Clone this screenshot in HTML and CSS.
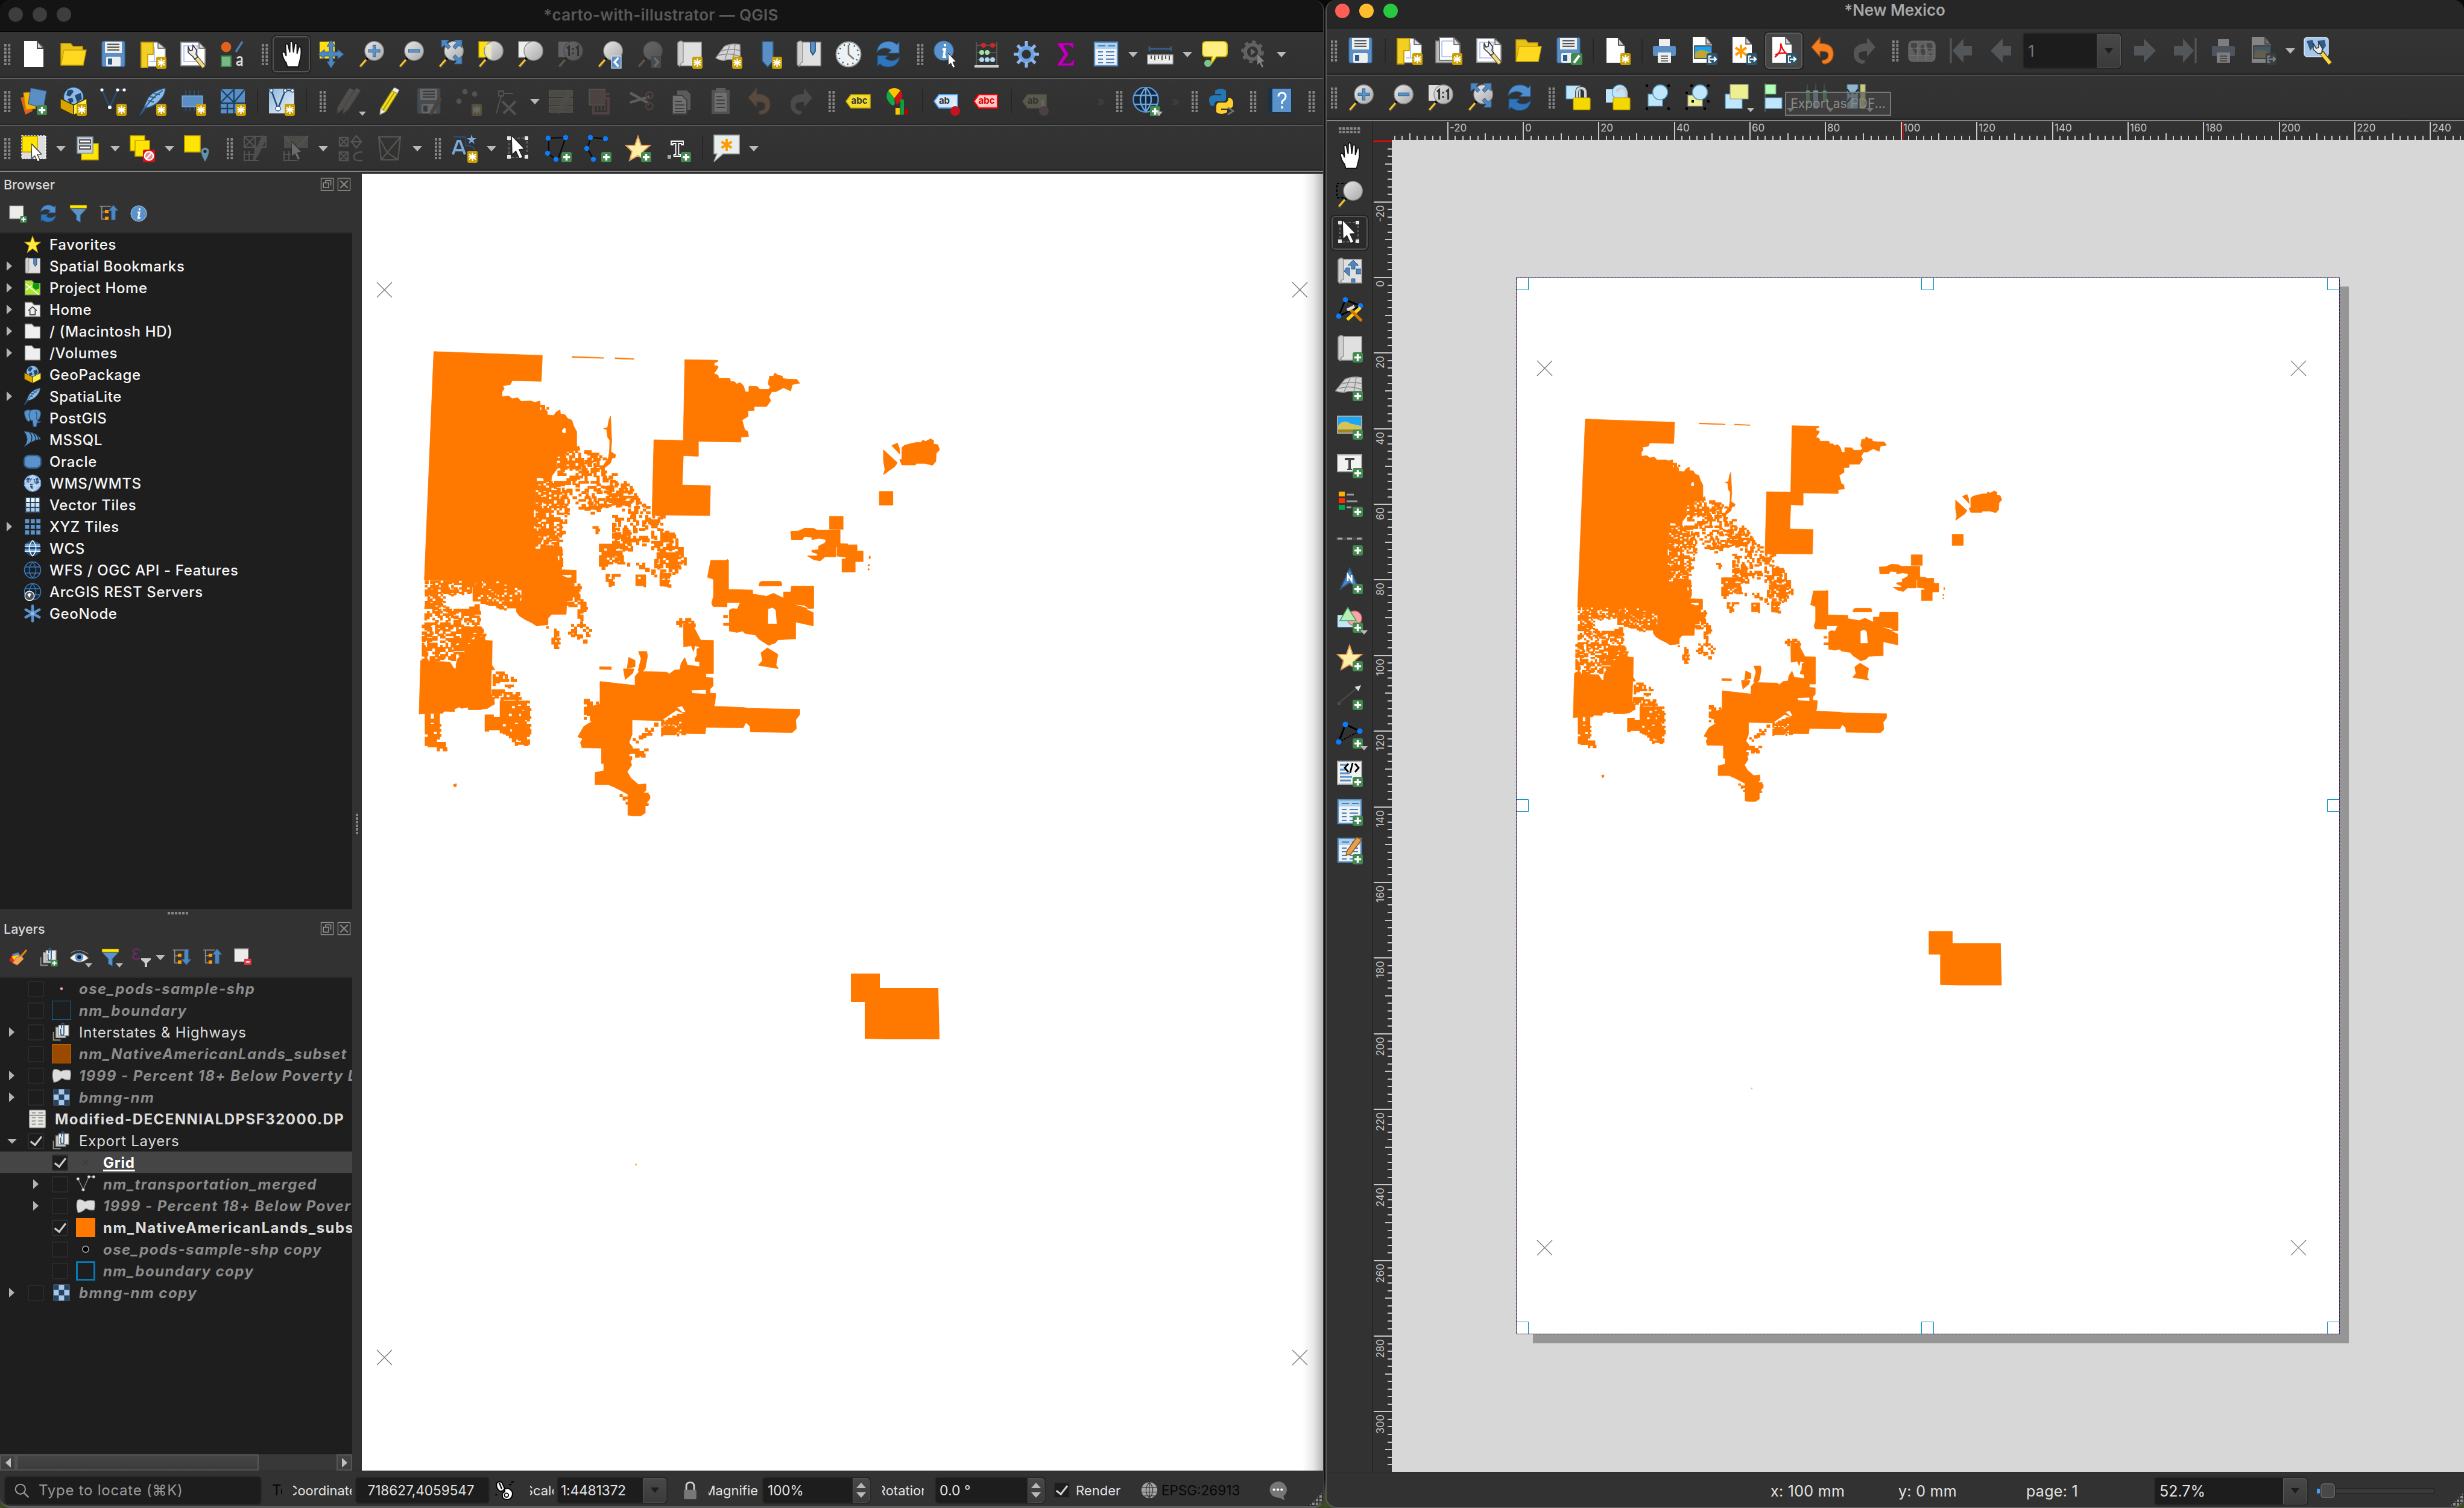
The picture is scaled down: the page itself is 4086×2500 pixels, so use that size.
FILE: index.html
```html
<!DOCTYPE html>
<html lang="en">
<head>
<meta charset="utf-8">
<title>QGIS</title>
<link rel="stylesheet" href="styles.css">
</head>
<body>
<svg class="defs" aria-hidden="true">
<defs>
<linearGradient id="gLens" x1="0" y1="0" x2="1" y2="1"><stop offset="0" stop-color="#e8e8e8"/><stop offset="1" stop-color="#a9a9a9"/></linearGradient>
<linearGradient id="gBlue" x1="0" y1="0" x2="1" y2="1"><stop offset="0" stop-color="#8fb6dd"/><stop offset="1" stop-color="#eef4fa"/></linearGradient>

<!-- badges -->
<symbol id="b-new" viewBox="0 0 24 24"><rect x="14.5" y="14" width="8.5" height="10" rx="1.5" fill="#c9a000"/><path d="M18.75 15.5v7M16 16.8l5.5 4.4M21.5 16.8L16 21.2M15.6 19h6.3" stroke="#fff" stroke-width="1.1"/></symbol>
<symbol id="b-add" viewBox="0 0 24 24"><rect x="14.5" y="15" width="8.5" height="8.5" rx="1.5" fill="#41894f"/><path d="M18.75 16.5v5.6M16 19.3h5.6" stroke="#fff" stroke-width="1.7"/></symbol>
<symbol id="b-exp" viewBox="0 0 24 24"><rect x="14" y="14" width="9" height="10" rx="2" fill="#2c566f"/><path d="M18 16.5h-2v5h2M17 19h4.5M20 17l2 2-2 2" stroke="#fff" stroke-width="1.1" fill="none"/></symbol>
<symbol id="mag" viewBox="0 0 24 24"><path d="M9.5 15L3 23" stroke="#444" stroke-width="2.6"/><path d="M8 16.5L3.2 22" stroke="#ffc423" stroke-width="1.6"/><path d="M10 14.2l-1.6 2" stroke="#000" stroke-width="2.2"/><circle cx="14.8" cy="9.2" r="7.8" fill="url(#gLens)" stroke="#8d8d8d" stroke-width=".7"/></symbol>
<symbol id="roll" viewBox="0 0 24 24"><path d="M5 2h17v19.5H5z" fill="#e0e0e0" stroke="#a5a5a5" stroke-width=".8"/><path d="M2.5 2.5q3-3 4.5 0v16q-2 0-3 3.500l-1.500-1.500z" fill="#cfcfcf" stroke="#9a9a9a" stroke-width=".8"/></symbol>
<symbol id="cursor" viewBox="0 0 24 24"><path d="M0 0l11 11.500-4.500.5 3 6.500-2.800 1.300-3-6.500L.5 16.500z" fill="#fff" stroke="#222" stroke-width=".8"/></symbol>

<!-- project -->
<symbol id="new" viewBox="0 0 24 24"><path d="M4 1h11l5 5v16.500H4z" fill="#fff"/><path d="M15 1v6h5z" fill="#d6d6d6" stroke="#444" stroke-width=".9"/></symbol>
<symbol id="open" viewBox="0 0 24 24"><path d="M1.500 3h8l2 2.500h8V20h-18z" fill="#e8c11c" stroke="#c9a000" stroke-width=".7"/><path d="M4 8.500h18.500L20 21H1.500z" fill="#ffd91f" stroke="#c9a400" stroke-width=".7"/></symbol>
<symbol id="save" viewBox="0 0 24 24"><rect x="2.500" y="1.200" width="19" height="21" rx="1.500" fill="#5a8fc5" stroke="#3a6a9a" stroke-width=".6"/><rect x="5" y="1.500" width="14" height="9.500" fill="#efefef"/><path d="M7 3.800h10M7 6.100h10M7 8.400h10" stroke="#444" stroke-width="1"/><rect x="6" y="14" width="12" height="8" rx="1" fill="#efefef"/><rect x="7.500" y="15.500" width="3.500" height="5" fill="#2d5c8a"/></symbol>
<symbol id="layout" viewBox="0 0 24 24"><path d="M2 2h14l6 5v15H2z" fill="#fff" stroke="#999" stroke-width=".8"/><path d="M16 2v5h6z" fill="#ddd" stroke="#555" stroke-width=".7"/><path d="M2 2h10v10H7.500v11H2z" fill="#f3cf25" stroke="#c9a000" stroke-width=".9"/><path d="M13 6v12M9 18h9" stroke="#b9c9f5" stroke-width="1"/><use href="#b-new"/></symbol>
<symbol id="wrench" viewBox="0 0 24 24"><path d="M2 2h15l5 5v14.500H2z" fill="#fff" stroke="#999" stroke-width=".9"/><path d="M17 2v5h5z" fill="#ddd" stroke="#555" stroke-width=".7"/><path d="M4.500 5h11v13h-11z" fill="none" stroke="#b9c9f5"/><path d="M14 14l7.500 9" stroke="#57481a" stroke-width="3.800"/><path d="M14.500 14.500l6.500 8" stroke="#f0d98a" stroke-width="2.600"/><path d="M8 5.500v5l4 3.500 1.500 2 2.500-2-1.500-2 .5-3.500-3-4-.5 4-2 .5z" fill="#ececec" stroke="#333" stroke-width=".8"/></symbol>
<symbol id="style" viewBox="0 0 24 24"><circle cx="6.500" cy="6" r="4.200" fill="#e0621d"/><path d="M14.500 10L20 1.500" stroke="#4c7fb5" stroke-width="1.700"/><rect x="2.500" y="13.500" width="8" height="8.500" fill="#77b885" stroke="#3c8a50"/><path d="M15.500 15.200q3-2 4 0v6.500M19.500 18q-4-.5-4 1.800.8 2.200 4 0" fill="none" stroke="#ddd" stroke-width="1.400"/></symbol>
<symbol id="hand" viewBox="0 0 24 24"><path d="M8 22l-1-3.500Q4.500 16 3.500 10.500q1-1.800 2.500 0l1 2.500L6.500 3.500q1-1.500 2 0L10 10 10.200 1.500q1-1.500 2 0L13 10l1-7q1-1.200 1.900 0L16 11l1.500-5.500q1.300-.8 1.700.5.600 6-.7 10L17 22z" fill="#fff" stroke="#111" stroke-width=".9" transform="translate(.8 .5)"/></symbol>
<symbol id="panto" viewBox="0 0 24 24"><path d="M2.500 1.500H15v14H2.500z" fill="#ffe017"/><path d="M12 .5l3.500 5h-2v4.500h4V8l5 4-5 4v-2.500h-4V18h2L12 23.500 8.500 18h2v-4.500h-4V16L1.500 12l5-4v2h4V5.500h-2z" fill="#4f86bf" stroke="#2d5c8a" stroke-width=".5"/></symbol>
<symbol id="zin" viewBox="0 0 24 24"><use href="#mag"/><path d="M14.800 4.200v10M9.800 9.200h10" stroke="#2d5c8a" stroke-width="2.600"/><path d="M14.800 4.700v9M10.300 9.200h9" stroke="#5a93cc" stroke-width="1.800"/></symbol>
<symbol id="zout" viewBox="0 0 24 24"><use href="#mag"/><path d="M10 9.200h9.600" stroke="#2d5c8a" stroke-width="2.800"/><path d="M10.400 9.200h8.800" stroke="#5a93cc" stroke-width="2"/></symbol>
<symbol id="zfull" viewBox="0 0 24 24"><use href="#mag"/><path d="M4.500 0h6.500L9 2.200l3 3.500-2 2L7 4.500 4.500 6.500zM21.500 0H15l2 2.200-3 3.500 2 2 3-3.200 2.500 2zM21.500 20H15l2-2.200-3-3.500 2-2 3 3.200 2.500-2z" fill="#4f86bf" stroke="#2d5c8a" stroke-width=".5"/></symbol>
<symbol id="zsel" viewBox="0 0 24 24"><path d="M2.500 1.500H12v13H2.500z" fill="#ffe017" stroke="#b99600" stroke-width=".7"/><use href="#mag"/><path d="M8 10V4h5v12Q8.500 15 8 10z" fill="#f3eeb2" opacity=".8"/></symbol>
<symbol id="zlay" viewBox="0 0 24 24"><path d="M2.500 1.500H12v13H2.500z" fill="#eee" stroke="#999" stroke-width=".7"/><use href="#mag"/></symbol>
<symbol id="z11" viewBox="0 0 24 24"><path d="M2.500 1.500H12v13H2.500z" fill="#ddd"/><use href="#mag"/><path d="M9.500 7l1.800-1.500v8M17 7l1.800-1.500v8M14.500 7v1.500M14.500 10.500V12" fill="none" stroke="#333" stroke-width="1.500"/></symbol>
<symbol id="zlast" viewBox="0 0 24 24"><use href="#mag"/><rect x="13.500" y="13.500" width="8" height="10" fill="#5a8fc5" stroke="#dfe9f3" stroke-width=".6"/><path d="M19.300 14.800l-3.300 3.700 3.300 3.700" stroke="#fff" stroke-width="1.700" fill="none"/></symbol>
<symbol id="znext" viewBox="0 0 24 24"><use href="#mag"/><rect x="13.500" y="13.500" width="8" height="10" fill="#5a8fc5"/><path d="M16 14.800l3.300 3.700-3.300 3.700" stroke="#fff" stroke-width="1.700" fill="none"/></symbol>
<symbol id="nmap" viewBox="0 0 24 24"><use href="#roll"/><use href="#b-new"/></symbol>
<symbol id="n3d" viewBox="0 0 24 24"><path d="M8 5.500q6-3 13-1.500l.5 15q-8-4-13-2-3.500.500-7.500-2z" fill="#d3d3d3" stroke="#999" stroke-width=".7"/><path d="M12.500 4.500l-4 12M17 3.800l-1.500 13M5.500 9.500q7-3 16-.5M3 13q9-3 18.500 1" fill="none" stroke="#8a8a8a" stroke-width=".7"/><use href="#b-new"/></symbol>
<symbol id="nbook" viewBox="0 0 24 24"><path d="M6.500 1.500h9v16l-4.500 5-4.500-5z" fill="#5a8fc5" stroke="#2d5c8a" stroke-width=".8"/><use href="#b-new"/></symbol>
<symbol id="book" viewBox="0 0 24 24"><use href="#roll"/><path d="M13.500 1.500h4v8l-2 3-2-3z" fill="#5a8fc5" stroke="#1f4a75" stroke-width=".8"/></symbol>
<symbol id="clock" viewBox="0 0 24 24"><circle cx="12" cy="12" r="10.200" fill="#eef2f2" stroke="#a5a5a5"/><circle cx="12" cy="12" r="8.300" fill="none" stroke="#2d5c8a" stroke-width="1.300" stroke-dasharray="1 3.350"/><path d="M12 4.500V12l4.500 4" fill="none" stroke="#777" stroke-width="1.300"/></symbol>
<symbol id="refresh" viewBox="0 0 24 24"><path d="M2.500 10Q4 2 11 1.500q5-.5 8 2.500l2-2v9h-9l2.500-2.500Q8 4.500 2.500 10z" fill="#4d8fd0" stroke="#2d5c8a" stroke-width=".6"/><path d="M21.500 14q-1.500 8-8.500 8.500-5 .5-8-2.500l-2 2v-9h9l-2.500 2.500Q16 19.500 21.500 14z" fill="#2f75bb" stroke="#1f4a75" stroke-width=".6"/></symbol>
<symbol id="ident" viewBox="0 0 24 24"><circle cx="9.500" cy="9" r="8" fill="#5a93cc" stroke="#3d6ea0" stroke-width=".6"/><path d="M10.500 3.500v2M8.500 8h2l-1 6h2" stroke="#fff" stroke-width="1.900" fill="none"/><g transform="translate(13 11) scale(.62)"><use href="#cursor"/></g></symbol>
<symbol id="abacus" viewBox="0 0 24 24"><path d="M3.500 2v19M20.500 2v19M3 4.500h18M3 10.500h18M3 16.500h18" stroke="#555" stroke-width="1"/><path d="M2 22h20" stroke="#ccc" stroke-width="2"/><g fill="#d22"><circle cx="9.500" cy="4.500" r="2"/><circle cx="17" cy="4.500" r="2"/></g><g fill="#9fe0a5"><circle cx="8" cy="10.500" r="2"/><circle cx="12.500" cy="10.500" r="2"/></g><g fill="#a9d8f5"><circle cx="8" cy="16.500" r="2"/><circle cx="12.500" cy="16.500" r="2"/><circle cx="17" cy="16.500" r="2"/></g></symbol>
<symbol id="gear" viewBox="0 0 24 24"><circle cx="12" cy="12" r="5.500" fill="none" stroke="#6b9fe0" stroke-width="3.400"/><path d="M12 1v4.500M12 18.500V23M1.500 12H6M18 12h4.500M4.600 4.600L8 8M16 16l3.400 3.400M19.400 4.600L16 8M8 16l-3.400 3.400" stroke="#8cb5ea" stroke-width="2.600"/></symbol>
<symbol id="sigma" viewBox="0 0 24 24"><path d="M5 2.500h13v4.500h-1.200q-.5-2.500-3-2.500H9.500L14 12l-5 7.500h5.500q2.500 0 3.200-3H19l-.8 5H5v-1.500L10.500 12 5 4z" fill="#c000b8" stroke="#7b0078" stroke-width=".5"/></symbol>
<symbol id="table" viewBox="0 0 24 24"><rect x="2.500" y="2" width="19" height="19.500" fill="#eef3f8" stroke="#5a8fc5" stroke-width="1.200"/><rect x="3" y="2.500" width="18" height="5" fill="#a9d1ee"/><path d="M5.500 5h6M14 5h5.500M5.500 10h4M12 10h7M5.500 13h4M12 13h7M5.500 16h4M12 16h7M5.500 19h4M12 19h7" stroke="#4c7fb5" stroke-width="1.100"/></symbol>
<symbol id="measure" viewBox="0 0 24 24"><path d="M3 7.500h18M3 5.500v4M21 5.500v4" stroke="#315f8c" stroke-width="1.500"/><rect x="1.500" y="12.500" width="21" height="7.500" fill="#ececec" stroke="#aaa" stroke-width=".7"/><path d="M4.500 13v3M7.500 13v4M10.500 13v3M13.500 13v4M16.500 13v3M19.500 13v4" stroke="#444" stroke-width=".9"/></symbol>
<symbol id="tip" viewBox="0 0 24 24"><path d="M5 1.500h14.500q3 0 3 3V11q0 3-3 3H13.500L9 20.500 10 14H5q-3 0-3-3V4.500q0-3 3-3z" fill="#ffee82" stroke="#d1b400"/><circle cx="6.500" cy="19.500" r="3" fill="#7ec488"/></symbol>
<symbol id="run" viewBox="0 0 24 24"><circle cx="10.500" cy="10" r="6" fill="none" stroke="#aaa" stroke-width="3"/><circle cx="10.500" cy="10" r="8.400" fill="none" stroke="#aaa" stroke-width="2" stroke-dasharray="3 3.500"/><path d="M9 7l4 3-4 3z" fill="#bbb"/><g transform="translate(14 11) scale(.62)"><use href="#cursor"/></g></symbol>

<!-- data sources -->
<symbol id="dsm" viewBox="0 0 24 24"><path d="M1 9l8-2 2 13-6 3z" fill="#e0621d"/><path d="M3.500 5l10-1v14l-8 1z" fill="#f7b500" stroke="#c98c00" stroke-width=".6"/><path d="M9.500 1l13 2.500L20 18 7.500 14z" fill="#5a8fc5" stroke="#2d5c8a" stroke-width=".6"/><use href="#b-add"/></symbol>
<symbol id="gpkg" viewBox="0 0 24 24"><circle cx="12" cy="8.500" r="8.200" fill="#8fb9e6" stroke="#1f4a75" stroke-width=".6"/><path d="M7 3q4-2 5 1L9 8 6 7zM13 7l5-2 1 5-4 3zM7 10l4-1 1 3-3 2z" fill="#1f4a75"/><path d="M1 9.500L12 15v8.500L1 18z" fill="#d9a300" stroke="#3d2f00" stroke-width=".7"/><path d="M23 9.500L12 15v8.500l11-5.500z" fill="#ffee4a" stroke="#3d2f00" stroke-width=".7"/></symbol>
<symbol id="ngpkg" viewBox="0 0 24 24"><use href="#gpkg"/><use href="#b-new"/></symbol>
<symbol id="vline" viewBox="0 0 24 24"><path d="M2.500 2.500L9 17 15.500 2.500h5.500" fill="none" stroke="#27507a" stroke-width="1.300"/><g fill="#fff"><circle cx="2.500" cy="2.500" r="1.300"/><circle cx="9" cy="17" r="1.500"/><circle cx="15.500" cy="2.500" r="1.300"/><circle cx="21" cy="2.500" r="1.300"/></g></symbol>
<symbol id="nshp" viewBox="0 0 24 24"><use href="#vline"/><use href="#b-new"/></symbol>
<symbol id="feather" viewBox="0 0 24 24"><path d="M22 1Q10 4 7 11q-2 4-2.500 6L1 23.500l5-6q7-1 12-7 4-4 4-9.500z" fill="#8fbce6" stroke="#2d5c8a" stroke-width=".7"/><path d="M20 3Q10 9 3 21M9 8l5 1M7.500 11.500l5 1M12.500 5.500l5 1" stroke="#2d5c8a" stroke-width="1" fill="none"/></symbol>
<symbol id="nspat" viewBox="0 0 24 24"><use href="#feather"/><use href="#b-new"/></symbol>
<symbol id="nmem" viewBox="0 0 24 24"><path d="M6 3v17M9.500 3v17M13 3v17M16.500 3v17" stroke="#27507a" stroke-width="1"/><rect x="3" y="7.500" width="17" height="9" fill="#5a8fc5" stroke="#8db3da" stroke-width=".6"/><use href="#b-new"/></symbol>
<symbol id="nmesh" viewBox="0 0 24 24"><path d="M2 2h20v20H2z" fill="#5a8fc5"/><path d="M2 2l11 11M13 2L2 13M13 2v11M22 2l-9 11M2 13.500h20M7.500 14v8M13 14v8M2 18h11" stroke="#1d3f63" stroke-width="1.200"/><use href="#b-new"/></symbol>
<symbol id="nvirt" viewBox="0 0 24 24"><path d="M1.500 1.500h21V22h-21z" fill="url(#gBlue)"/><path d="M3.500 3L9 18 15 3h6" fill="none" stroke="#27507a" stroke-width="1.300"/><g fill="#fff" stroke="#27507a" stroke-width=".7"><circle cx="3.500" cy="3" r="1.400"/><circle cx="9" cy="18" r="2"/><circle cx="15" cy="3" r="1.400"/><circle cx="21" cy="3" r="1.400"/></g><use href="#b-new"/></symbol>
<symbol id="pencil" viewBox="0 0 24 24"><path d="M14.500 3l4.500 2.500L9.500 20.500 4.500 23l.5-5z" fill="#f0dc20" stroke="#8a7a00" stroke-width=".7"/><path d="M14.500 3l2-2.500 4 2L19 5.500zM4.500 23l.5-5 4.500 2.500z" fill="#eee" stroke="#888" stroke-width=".5"/><path d="M16.500 4.500L7 19.500" stroke="#a89400" stroke-width=".8"/></symbol>
<symbol id="pencils" viewBox="0 0 24 24"><path d="M11 3l3.500 2L6 19l-4 3 .5-5zM16.500 3L20 5l-9 14-4 3 .5-5z" fill="#b59583" stroke="#777" stroke-width=".6"/><path d="M11 3l1.500-2 3.500 2-1.500 2zM16.500 3L18 1l3.500 2L20 5z" fill="#aaa"/></symbol>
<symbol id="savee" viewBox="0 0 24 24"><use href="#save"/><path d="M20 8l3 2-7 12-3 2v-3z" fill="#8a7060"/></symbol>
<symbol id="addpt" viewBox="0 0 24 24"><g fill="#8ab29a"><circle cx="9" cy="4" r="2.200"/><circle cx="17" cy="6" r="2.200"/><circle cx="4" cy="12" r="2.200"/></g><use href="#b-new"/></symbol>
<symbol id="vtool" viewBox="0 0 24 24"><path d="M4 3.500h4v4H4zM8 5.500h8M6 8L2 22" fill="none" stroke="#aaa" stroke-width=".9"/><path d="M7 12l11 11M18 12L8 22" stroke="#b0a58a" stroke-width="2"/></symbol>
<symbol id="attr" viewBox="0 0 24 24"><path d="M2 3h19v5H2zM2 9.500h19v5H2zM2 16h19v5H2z" fill="#8c8672" stroke="#bbae50" stroke-width=".8"/><path d="M17 2l4 2-8 16-4 3 1-6z" fill="#a08d84"/></symbol>
<symbol id="trash" viewBox="0 0 24 24"><path d="M2 2h13v13H2z" fill="#7d7660" stroke="#c9b94c" stroke-width=".7"/><path d="M4 6h15M9 4h6M5.500 9.500h12.500V22H5.500z" fill="none" stroke="#d05a64" stroke-width="2"/><path d="M9 11v9M12 11v9M15 11v9" stroke="#d05a64" stroke-width="1.200"/></symbol>
<symbol id="cut" viewBox="0 0 24 24"><path d="M3 5l16 9M3 13l16-5" stroke="#ccc" stroke-width="2.200"/><circle cx="19" cy="7" r="2.800" fill="none" stroke="#c05050" stroke-width="1.500"/><circle cx="19" cy="16" r="2.800" fill="none" stroke="#c05050" stroke-width="1.500"/></symbol>
<symbol id="copy" viewBox="0 0 24 24"><path d="M9 3h8l3 3v13H9z" fill="#999"/><path d="M5 7h8l4 4v11.500H5z" fill="#ccc" stroke="#555"/><path d="M7 12h6M7 15h8M7 18h8M7 20.500h8" stroke="#555" stroke-width="1"/></symbol>
<symbol id="paste" viewBox="0 0 24 24"><path d="M4.500 2.500h15v20h-15z" fill="#8a8070"/><path d="M7 5h10v15.500H7z" fill="#ccc"/><path d="M8 1h8v4H8z" fill="#999"/><path d="M8.500 8h5M8.500 11h7M8.500 14h7M8.500 17h7" stroke="#555"/></symbol>
<symbol id="undo" viewBox="0 0 24 24"><path d="M2 9l7-8v5q11 0 11 8.500 0 7-7 8.500-3-.5-2-3 5 0 5-4.500Q16 12 9 12.500V17z" fill="#f28022" stroke="#b85208" stroke-width=".7"/></symbol>
<symbol id="redo" viewBox="0 0 24 24"><path d="M22 9l-7-8v5Q4 6 4 14.500q0 7 7 8.500 3-.5 2-3-5 0-5-4.500Q8 12 15 12.500V17z" fill="#7f9088"/></symbol>
<symbol id="labY" viewBox="0 0 24 24"><path d="M2 12l4-5.500h16v11H6z" fill="#f3dc2a" stroke="#c9a800" stroke-width=".8"/></symbol>
<symbol id="diag" viewBox="0 0 24 24"><path d="M9 9.500L4 3q5-4 10 0z" fill="#ffc400"/><path d="M9 9.500L14.500 3Q18 10 11 15z" fill="#c81414"/><path d="M9 9.500L4 3Q0 10 7.500 15.500l2-1z" fill="#11aa44"/><path d="M10 17.500h3.500V23H10z" fill="#ffc400"/><path d="M14 10.500h3V23h-3z" fill="#0da040"/><path d="M17.500 18.500h3V23h-3z" fill="#b00"/></symbol>
<symbol id="labB" viewBox="0 0 24 24"><path d="M1.500 12l4-5.500H21v11H5.500z" fill="#d6e8fb" stroke="#4a9df5" stroke-width=".9"/><path d="M18 11v7" stroke="#eee" stroke-width="2"/><circle cx="19" cy="20" r="4" fill="#c4131f"/></symbol>
<symbol id="labG" viewBox="0 0 24 24"><path d="M1.500 12l4-5.500H21v11H5.500z" fill="#c9bd62" stroke="#c9a800" stroke-width=".8"/><path d="M18 11v7" stroke="#eee" stroke-width="2"/><circle cx="19" cy="20" r="4" fill="#b06070"/></symbol>
<symbol id="labR" viewBox="0 0 24 24"><path d="M1.500 12l4-5.500H21v11H5.500z" fill="#ffc9c9" stroke="#f00" stroke-width="1.100"/></symbol>
<symbol id="wms" viewBox="0 0 24 24"><circle cx="12" cy="10.500" r="10.300" fill="#12283f" stroke="#5a93cc" stroke-width="1.200"/><path d="M12 .5v20M2 7h20M2 14.500h20M12 .5q-9 10 0 20M12 .5q9 10 0 20" fill="none" stroke="#6fa3da" stroke-width="1.200"/><g transform="translate(1 1)"><use href="#b-add"/></g></symbol>
<symbol id="python" viewBox="0 0 24 24"><path d="M7 3q5-3 9 0v7q0 2-3 2H8q-2 1-2 4-4 0-4-5 0-4 4-4h6V6H7z" fill="#2576b4"/><path d="M17 21q-5 3-9 0v-5q0-3 3-3h5q2-1 2-4 4 0 4 5 0 4-4 4h-6v1h5z" fill="#ffd02b"/><path d="M17.500 17l4.500 3-4.500 3" stroke="#777" fill="none" stroke-width="1.300"/></symbol>
<symbol id="help" viewBox="0 0 24 24"><path d="M2 1h20v20.500H2z" fill="#1b3147"/><path d="M6 1.500h15.500V21H6z" fill="#5a93cc"/><path d="M11 8q0-3 3-3t3 3q0 2-3 4v2M14 16v2" stroke="#fff" stroke-width="1.500" fill="none"/></symbol>

<!-- selection -->
<symbol id="sel" viewBox="0 0 24 24"><path d="M2 1.500h20v19H2z" fill="#ddd" stroke="#fff" stroke-width=".8" stroke-dasharray="1.500 1"/><path d="M2.500 2h12.500v13H2.500z" fill="#ffe600" stroke="#c9a000" stroke-width=".8"/><g transform="translate(10 8) scale(.76)"><use href="#cursor"/></g></symbol>
<symbol id="selform" viewBox="0 0 24 24"><path d="M6.500 8h14v13.500h-14z" fill="#ffe600" stroke="#c9a000" stroke-width=".8"/><path d="M3 2.500h13v13.500H3z" fill="#c8d2da" stroke="#8795a0" stroke-width=".8"/><path d="M5 5h9v2.500H5zM5 10h9v2.500H5z" fill="#fff" stroke="#444" stroke-width=".9"/></symbol>
<symbol id="desel" viewBox="0 0 24 24"><path d="M2 1.500h12v12.500H2z" fill="#ffe600" stroke="#c9a000" stroke-width=".8"/><path d="M6 5.500h12v13H6z" fill="#ffe600" stroke="#c9a000" stroke-width=".8"/><rect x="12.500" y="13" width="10" height="10.500" rx="1.500" fill="#d11"/><circle cx="17.500" cy="18.200" r="3.600" fill="#e88" stroke="#fff" stroke-width="1.200"/><path d="M15 21l5-5.500" stroke="#fff" stroke-width="1.300"/></symbol>
<symbol id="selloc" viewBox="0 0 24 24"><path d="M2 1.500h13v13.500H2z" fill="#ffe600" stroke="#c9a000" stroke-width=".8"/><path d="M19 23q-4-7-3-10 3-3.500 6 0 1 3-3 10z" fill="#5f93ab"/><circle cx="19" cy="14.500" r="1.300" fill="#222"/></symbol>
<symbol id="meshed" viewBox="0 0 24 24"><path d="M2 2h18v9H2zM11 2v20M2 2l9 9M11 2L2 11M2 14v8h12M2 17h9M6 14v8" fill="none" stroke="#aaa" stroke-width="1"/><path d="M17 1l4 2-8 16-4 3 1-6z" fill="#a09890"/></symbol>
<symbol id="meshsel" viewBox="0 0 24 24"><path d="M2 1.500h20v10H2z" fill="#8a8a70"/><path d="M2 14v8h12M2 17h12M6 14v8M2 1.500l9 10M22 1.500l-9 10" stroke="#aaa" fill="none"/><g transform="translate(8 6) scale(.8)"><use href="#cursor"/></g></symbol>
<symbol id="meshtr" viewBox="0 0 24 24"><path d="M3 3h7v7H3zM3 3l7 7M10 3L3 10M3 15h7v7H3zM3 15l7 7M10 15l-7 7M12 6.500h10M17 1.500l4 5-4 5-4-5zM22 15q-7 0-7 4t7 3" fill="none" stroke="#aaa" stroke-width="1.200"/></symbol>
<symbol id="meshpoly" viewBox="0 0 24 24"><path d="M2.500 2.500h18l-2 19h-14zM2.500 2.500l7 13 11-13M4.500 21.500l5-6 9 6" fill="none" stroke="#b5b09a" stroke-width="1.100"/></symbol>
<symbol id="annl" viewBox="0 0 24 24"><path d="M3 2.500h10v7q6 0 8 4" fill="none" stroke="#27507a" stroke-width=".9"/><path d="M2.500 17L6.500 6h2l4 11M4 13.500h7" fill="none" stroke="#79a9dc" stroke-width="2"/><path d="M18 .5l1 3h3l-2.500 1.800.9 3L18 6.500l-2.400 1.800.9-3L14 3.500h3z" fill="#79a9dc"/><use href="#b-new"/></symbol>
<symbol id="selitem" viewBox="0 0 24 24"><path d="M4 3.500h15v16H4z" fill="none" stroke="#666" stroke-dasharray="2 1.500"/><path d="M2.500 2h3v3h-3zM17 2h3v3h-3zM2.500 17.500h3v3h-3zM17 17.500h3v3h-3z" fill="#e6e6e6"/><g transform="translate(6 1)"><use href="#cursor"/></g></symbol>
<symbol id="poly" viewBox="0 0 24 24"><path d="M4 3.500L18 3M4 3.500v13l6 5M18 3l-6 17" fill="none" stroke="#0a0a0a" stroke-width="1.100"/><g fill="#0a7dff"><circle cx="3.500" cy="3.500" r="2.100"/><circle cx="18" cy="3" r="2.100"/><circle cx="3" cy="16" r="2.100"/><circle cx="10" cy="21" r="2.100"/></g><use href="#b-add"/></symbol>
<symbol id="line" viewBox="0 0 24 24"><path d="M18 4L6 3 3 12l5 9" fill="none" stroke="#0a0a0a" stroke-width="1.100"/><g fill="#0a7dff"><circle cx="18" cy="4" r="2.100"/><circle cx="5.500" cy="3" r="2.100"/><circle cx="2.500" cy="12" r="2.100"/><circle cx="8" cy="21" r="2.100"/></g><use href="#b-add"/></symbol>
<symbol id="star" viewBox="0 0 24 24"><path d="M12 2l2.600 7.500h7.400l-5.800 5 2 7.500L12 18l-7 4 2-7.500-5-5h7.400z" fill="#fdeea8" stroke="#e3a05c" stroke-width="1"/><use href="#b-add"/></symbol>
<symbol id="text" viewBox="0 0 24 24"><path d="M6.500 6h10v3h-1.500V8h-2.300v9h1.500v1.500H8.800V17h1.500V8H8v1H6.500z" fill="#333" stroke="#fff" stroke-width=".9"/><path d="M3.500 17.500h3v3h-3z" fill="#aaa"/><use href="#b-add"/></symbol>
<symbol id="htmla" viewBox="0 0 24 24"><path d="M1.500 1h21v15.500H9L1.500 23 4 16.500H1.500z" fill="#e7eeee" stroke="#aaa" stroke-width=".8"/><path d="M12 4v10M7.700 6.500l8.600 5M16.300 6.500l-8.600 5" stroke="#ff9a00" stroke-width="1.900"/></symbol>

<!-- layout window -->
<symbol id="dupl" viewBox="0 0 24 24"><path d="M1 4h14v18H1z" fill="#bbb" stroke="#888" stroke-width=".8"/><path d="M4 1h12l5 5v14H4z" fill="#fff" stroke="#777"/><path d="M16 1v6h5z" fill="#ddd" stroke="#555" stroke-width=".7"/><path d="M6 4h9M6 4v13h12" stroke="#b9c9f5" fill="none"/><use href="#b-new"/></symbol>
<symbol id="savet" viewBox="0 0 24 24"><use href="#save"/><rect x="14" y="14" width="9.500" height="10" rx="1.500" fill="#41894f"/><path d="M16.500 22l4.500-6" stroke="#fff" stroke-width="2"/></symbol>
<symbol id="npage" viewBox="0 0 24 24"><path d="M3 1.500h10l5 6V22H3z" fill="#fff"/><path d="M13 1.500v6h5z" fill="#ccc" stroke="#333" stroke-width=".8"/><use href="#b-new"/></symbol>
<symbol id="print" viewBox="0 0 24 24"><path d="M7.500 2.500h9V9h-9z" fill="#eee"/><rect x="2.500" y="8" width="19" height="8.500" rx="1.500" fill="#5a8fc5"/><path d="M6.500 13.500h11V22h-11z" fill="#eee"/><path d="M9 16.500h6M9 18.500h6M9 20.500h6" stroke="#444" stroke-width=".8"/></symbol>
<symbol id="ximg" viewBox="0 0 24 24"><path d="M2.500 .5h11l5 6V22h-16z" fill="#fff"/><path d="M13.500 .5v6h5z" fill="#ccc" stroke="#444" stroke-width=".7"/><path d="M4 8h14v10.500H4z" fill="#1ea0ee" stroke="#333" stroke-width=".7"/><path d="M4.500 14q4-5 13 0v4h-13z" fill="#bda53a"/><use href="#b-exp"/></symbol>
<symbol id="xsvg" viewBox="0 0 24 24"><path d="M2.500 .5h11l5 6V22h-16z" fill="#fff"/><path d="M13.500 .5v6h5z" fill="#ccc" stroke="#444" stroke-width=".7"/><path d="M9.500 7v11M5 9.500l9 6M14 9.500l-9 6" stroke="#ff9a00" stroke-width="2"/><use href="#b-exp"/></symbol>
<symbol id="xpdf" viewBox="0 0 24 24"><path d="M2.500 .5h11l5 6V22h-16z" fill="#fff"/><path d="M13.500 .5v6h5z" fill="#ccc" stroke="#444" stroke-width=".7"/><path d="M9.500 6q1 7-5 11.500M9.500 6q1 6 6 9.500M5 15.500q4-2 9-1.500" fill="none" stroke="#ee1111" stroke-width="1.200"/><use href="#b-exp"/></symbol>
<symbol id="atlas" viewBox="0 0 24 24"><rect x="1" y="4" width="22" height="17" rx="3.500" fill="#a4a9ae" stroke="#c5c8ca" stroke-width=".6"/><path d="M3 6q4-1 6 1l-2 3 1 2-1 4-2-4-2-3zM11 8l3-1v3l1 4-2 3-2-4zM15 6l5-.5 1 4-2 3-2-1zM18 14l3 1-2 2z" fill="#5a6066"/><path d="M1 10h22M1 16h22M8.500 4v17M15.500 4v17" stroke="#d5d8db" stroke-width=".5"/></symbol>
<symbol id="first" viewBox="0 0 24 24"><path d="M3 1.500v21" stroke="#7a8fa0" stroke-width="1.600"/><path d="M4.500 12l9-10v6h7v8h-7v6z" fill="#7a8fa0"/></symbol>
<symbol id="prev" viewBox="0 0 24 24"><path d="M3 12l10-10v6h7v8h-7v6z" fill="#7a8fa0"/></symbol>
<symbol id="next" viewBox="0 0 24 24"><path d="M22 12L12 2v6H4v8h8v6z" fill="#7a8fa0"/></symbol>
<symbol id="last" viewBox="0 0 24 24"><path d="M22 1.500v21" stroke="#7a8fa0" stroke-width="1.600"/><path d="M20.500 12l-9-10v6H4v8h7.500v6z" fill="#7a8fa0"/></symbol>
<symbol id="atlset" viewBox="0 0 24 24"><rect x="1" y="1" width="20" height="16" rx="2.500" fill="#a6c6ec" stroke="#dbe8f7" stroke-width=".7"/><path d="M3 4l5-1 1 5-3 4zM12 4l6-1 1 5-3 4z" fill="#2d5c8a"/><path d="M15 13l8 10" stroke="#57481a" stroke-width="4"/><path d="M15.500 14l7 8.500" stroke="#ffd84a" stroke-width="2.800"/><path d="M8.500 6v5l4 3.500 3-.5.500-4-3-5 0 4.500-2 .5z" fill="#ececec" stroke="#333" stroke-width=".8"/></symbol>
<symbol id="lock" viewBox="0 0 24 24"><path d="M2 2h12v11H2z" fill="#bfe6fb" stroke="#4d92b8" stroke-width=".6"/><path d="M11 14V8q0-4 3.500-4T18 8v6" fill="none" stroke="#444" stroke-width="3"/><path d="M11 14V8q0-4 3.500-4T18 8v6" fill="none" stroke="#d5d5d5" stroke-width="2"/><rect x="8" y="12" width="14" height="10" rx="1" fill="#f5d800" stroke="#b89e00" stroke-width=".6"/></symbol>
<symbol id="unlock" viewBox="0 0 24 24"><path d="M2 5h9v11H2z" fill="#bfe6fb"/><circle cx="13.500" cy="7.500" r="6.200" fill="#bfe6fb" stroke="#4d92b8" stroke-width=".6"/><path d="M11 7q1-3 4-3t4 4v6" fill="none" stroke="#ccc" stroke-width="2"/><rect x="8" y="12" width="14" height="10" rx="1" fill="#f5d800" stroke="#b89e00" stroke-width=".6"/></symbol>
<symbol id="group" viewBox="0 0 24 24"><path d="M4 9h12v10H4z" fill="#bfe6fb" stroke="#4d92b8" stroke-width=".6"/><circle cx="14" cy="7.500" r="6.200" fill="#bfe6fb" stroke="#4d92b8" stroke-width=".8"/><path d="M2 1h2v2H2zM20 1h2v2h-2zM2 20h2v2H2zM20 20h2v2h-2z" fill="#000"/></symbol>
<symbol id="ungroup" viewBox="0 0 24 24"><path d="M4 10h12v9H4z" fill="#ecef92" stroke="#999" stroke-width=".6"/><circle cx="14" cy="7.500" r="6.200" fill="#bfe6fb" stroke="#4d92b8" stroke-width=".8"/><path d="M6 1h2v2H6zM20 1h2v2h-2zM2 7h2v2H2zM2 20h2v2H2zM17 20h2v2h-2zM20 14h2v2h-2zM7 14h2v2H7z" fill="#000"/></symbol>
<symbol id="raise" viewBox="0 0 24 24"><path d="M2 9h14v12H2z" fill="#bfe6fb" stroke="#4d92b8" stroke-width=".6"/><path d="M6 1h15v12H6z" fill="#eef08f" stroke="#999" stroke-width=".6"/></symbol>
<symbol id="align" viewBox="0 0 24 24"><path d="M2 0v24" stroke="#555"/><path d="M2 1h9v8H2z" fill="#b6fbbd" stroke="#5aa763" stroke-width=".6"/><path d="M2 12h14v9H2z" fill="#bfe6fb" stroke="#4d92b8" stroke-width=".6"/></symbol>
<symbol id="distr" viewBox="0 0 24 24"><path d="M4 1v20M11 1v20M18 1v20" stroke="#555" stroke-width=".7"/><path d="M3 6h3v11H3zM17 6h3v9h-3z" fill="#5a9a66"/><path d="M9 6h4v15H9z" fill="#7d9fb4"/></symbol>
<symbol id="resize" viewBox="0 0 24 24"><path d="M4 1h9v20H4z" fill="#8fb6cd" stroke="#4d7690" stroke-width=".6"/><path d="M15 1h4v20h-4z" fill="#c9cc6c" stroke="#999" stroke-width=".6"/><path d="M4 5l3 4M13 5l-3 4M4 16l3-4M13 16l-3-4" stroke="#222" stroke-width="1.200"/></symbol>

<!-- toolbox -->
<symbol id="zoomt" viewBox="0 0 24 24"><path d="M1.500 3h9v12h-9z" fill="none" stroke="#000" stroke-dasharray="2 1.500"/><use href="#mag"/></symbol>
<symbol id="movec" viewBox="0 0 24 24"><use href="#roll"/><path d="M15 2.500l4.500 4.500h-3v3h-3V7h-3zM12 9H9L7.500 12 12 16zM21.500 10h-4v4h4M13.500 21v-3h3v3z" fill="#4f86bf" stroke="#1f4a75" stroke-width=".4"/></symbol>
<symbol id="nodes" viewBox="0 0 24 24"><path d="M3 17L8.500 3.500 21 8.500M3 17L21 8.500" fill="none" stroke="#000" stroke-width="1.300"/><g fill="#0a7dff"><circle cx="3" cy="17" r="2.200"/><circle cx="8.500" cy="3.500" r="2.200"/><circle cx="21" cy="8.500" r="2.200"/></g><path d="M10 20L21 10" stroke="#ffd61f" stroke-width="2.600"/><path d="M12 11l10 10" stroke="#d07a00" stroke-width="2.600"/><path d="M10 12l6-3" stroke="#ddd" stroke-width="2.500"/></symbol>
<symbol id="amap" viewBox="0 0 24 24"><use href="#roll"/><use href="#b-add"/></symbol>
<symbol id="a3d" viewBox="0 0 24 24"><path d="M8 5.500q6-3 14-1.500l.3 14q-8-4-14-2-3.500.5-8-1z" fill="#d3d3d3" stroke="#999" stroke-width=".7"/><path d="M12.500 4.500l-5 11M17.500 3.800l-2 12M5.500 9.500q7-3 16.500-.5M3 13q9-3 19 1" fill="none" stroke="#8a8a8a" stroke-width=".7"/><use href="#b-add"/></symbol>
<symbol id="apic" viewBox="0 0 24 24"><path d="M2 4h20v14H2z" fill="#18a6f5" stroke="#aaa"/><path d="M2.500 12q4-6 10-2l9 2v5.500h-19z" fill="#d5c25a"/><path d="M2.500 15h19v2.500h-19z" fill="#9c8428"/><use href="#b-add"/></symbol>
<symbol id="alab" viewBox="0 0 24 24"><path d="M2 4h20v14H2z" fill="#f2f2f2" stroke="#aaa"/><path d="M8 6.500h8v2h-3v7h1v1h-4v-1h1v-7H8z" fill="#444"/><use href="#b-add"/></symbol>
<symbol id="aleg" viewBox="0 0 24 24"><path d="M3 2.500h5v4H3z" fill="#ffb000"/><path d="M3 8h5v4H3z" fill="#ff3000"/><path d="M3 13.500h5v4H3z" fill="#00a550"/><path d="M9.500 5h6M9.500 10.500h9M9.500 15.500h4" stroke="#999" stroke-width="1.500"/><use href="#b-add"/></symbol>
<symbol id="ascale" viewBox="0 0 24 24"><path d="M1 9.500h22" stroke="#444" stroke-width="2.400"/><path d="M2 9.500h4M10 9.500h4M18 9.500h4" stroke="#aaa" stroke-width="1.600"/><use href="#b-add"/></symbol>
<symbol id="anorth" viewBox="0 0 24 24"><path d="M12 2l7.500 17-7.500-5-7.500 5z" fill="#4f86bf" stroke="#2d5c8a"/><path d="M10.500 12.500v-5l3.200 5v-5" stroke="#fff" stroke-width="1.300" fill="none"/><use href="#b-add"/></symbol>
<symbol id="ashape" viewBox="0 0 24 24"><path d="M2 9h13v10H2z" fill="#bfe6fb"/><circle cx="16" cy="11.500" r="6" fill="#f6a5a8" stroke="#d66" stroke-width=".7"/><path d="M10.500 2.500l7 11H4z" fill="#b3f0b8" stroke="#4f9a5a" stroke-width=".8"/><use href="#b-add"/></symbol>
<symbol id="aarrow" viewBox="0 0 24 24"><path d="M2 18.500L18 5.500" stroke="#4c4c4c" stroke-width="1.100"/><path d="M2 17h2.500v2.500H2z" fill="#4c4c4c"/><path d="M21.500 3l-2.200 5-3-3.600z" fill="#ddd"/><use href="#b-add"/></symbol>
<symbol id="anode" viewBox="0 0 24 24"><path d="M3 18L8.500 3.500 20.500 9" fill="none" stroke="#000" stroke-width="1.500"/><path d="M3 18L20.500 9" stroke="#000" stroke-dasharray="1.500 1"/><g fill="#0a7dff"><circle cx="3" cy="18" r="2.300"/><circle cx="8.500" cy="3.500" r="2.300"/><circle cx="20.500" cy="9" r="2.300"/></g><use href="#b-add"/></symbol>
<symbol id="ahtml" viewBox="0 0 24 24"><path d="M2 2h20v19H2z" fill="#f2f2f2" stroke="#aaa"/><path d="M4 5h6M4 9h5M4 12h8M4 15h10M4 18h9" stroke="#5a8fc5" stroke-width="1.400"/><path d="M11 4L8 7.500l3 3.500M14.500 3.500l-2 8M16.500 4l3 3.500-3 3.500" fill="none" stroke="#000" stroke-width="1.400"/><use href="#b-add"/></symbol>
<symbol id="atable" viewBox="0 0 24 24"><use href="#table"/><use href="#b-add"/></symbol>
<symbol id="amant" viewBox="0 0 24 24"><use href="#table"/><path d="M18 1l4 2-9 12-4 1 1-4z" fill="#e8a050" stroke="#8a4f10" stroke-width=".7"/><use href="#b-add"/></symbol>

<!-- panels -->
<symbol id="plus-l" viewBox="0 0 24 24"><path d="M1.500 2.500h17v16h-17z" fill="#ecedea" stroke="#9a9a96"/><use href="#b-add"/></symbol>
<symbol id="minus-l" viewBox="0 0 24 24"><path d="M1.500 1.500h17v16h-17z" fill="#ecedea" stroke="#9a9a96"/><rect x="13.500" y="14" width="9" height="7.500" rx="1" fill="#e33344"/><path d="M15.500 17.700h5" stroke="#fff" stroke-width="1.600"/></symbol>
<symbol id="filter" viewBox="0 0 24 24"><path d="M2 6h20l-7.500 8v9L9.500 20v-6z" fill="#5a93cc" stroke="#2d5c8a" stroke-width=".7"/><path d="M1.500 1.500h21v4h-21z" fill="#ffe600" stroke="#665c00" stroke-width=".5"/></symbol>
<symbol id="coll" viewBox="0 0 24 24"><path d="M1 3h14M3.500 3v16H9M3.500 10H9" fill="none" stroke="#909088" stroke-width="1.300"/><path d="M7.500 7.500H12v4H7.500zM7.500 16H12v4H7.500z" fill="#ff9a00"/><path d="M18 1.500l6 7h-3.500V20h-5V8.500H12z" fill="#4f86bf" stroke="#2d5c8a" stroke-width=".6"/></symbol>
<symbol id="expd" viewBox="0 0 24 24"><path d="M1 3h20M3.500 3v16H9M3.500 10H9" fill="none" stroke="#909088" stroke-width="1.300"/><path d="M7.500 7.500H12v4H7.500zM7.500 16H12v4H7.500z" fill="#ff9a00"/><path d="M18 21.500l6-7h-3.500V2h-5v12.500H12z" fill="#4f86bf" stroke="#2d5c8a" stroke-width=".6"/></symbol>
<symbol id="info" viewBox="0 0 24 24"><circle cx="12" cy="12" r="9.800" fill="#5a93cc" stroke="#d2e2f2" stroke-width=".6"/><path d="M13 5.500v2.500M10.500 10.500h2.500l-1.500 7h2.500" stroke="#fff" stroke-width="2" fill="none"/></symbol>
<symbol id="brush" viewBox="0 0 24 24"><path d="M1 16l4-8 8-2 3 9-6 7z" fill="#e22"/><path d="M5 8l7-2 3 4-8 3z" fill="#4f86e0"/><path d="M4 11l8-2 3 4-7 4z" fill="#ffd400"/><path d="M22.500 3l-7 8" stroke="#e08a00" stroke-width="2.400"/><path d="M10 12l6-2 3 4-8 8-6-3z" fill="#f2a55a" stroke="#9a5a10" stroke-width=".6"/></symbol>
<symbol id="grp" viewBox="0 0 24 24"><path d="M2 12v10h9" fill="none" stroke="#8f9089" stroke-width="1.500"/><path d="M5 6h12v13H5z" fill="#c9cac6" stroke="#8f9089"/><path d="M8.500 3.500H21v13H8.500z" fill="#ecedea" stroke="#8f9089"/><path d="M11 8v5q0 3 2 3t2-3V3q0-2-1.500-2T12 3v4" fill="none" stroke="#2d5c8a" stroke-width="1.400"/></symbol>
<symbol id="addgrp" viewBox="0 0 24 24"><use href="#grp"/><use href="#b-add"/></symbol>
<symbol id="eye" viewBox="0 0 24 24"><path d="M0 13Q11 1 23 13 11 23 0 13z" fill="#f4f4f4" stroke="#8a7f75" stroke-width=".8"/><circle cx="11.500" cy="11.800" r="5.200" fill="#5a93cc"/><circle cx="11.500" cy="11.800" r="2.400" fill="#10202f"/><path d="M1 7Q11 0 23 8" fill="none" stroke="#888" stroke-width=".9"/></symbol>
<symbol id="eps" viewBox="0 0 24 24"><path d="M11 3Q4 0 2 4q0 3 5 3.500Q1 8 1.500 12q2 4 9.500 1" fill="none" stroke="#6a2a6a" stroke-width="1.900"/><path d="M12 13h12v2l-4.500 4v5h-3v-5L12 15z" fill="#ccc"/></symbol>
<symbol id="fav" viewBox="0 0 24 24"><path d="M12 1l2.900 8H23l-6.500 5 2.500 9-7-5.300L5 23l2.500-9L1 9h8.100z" fill="#ffee3a" stroke="#c98f00" stroke-width=".8"/></symbol>
<symbol id="fold" viewBox="0 0 24 24"><path d="M2 2.500h9l3 3.500h8v15.500H2z" fill="#efefef" stroke="#8d8d88"/></symbol>
<symbol id="foldh" viewBox="0 0 24 24"><use href="#fold"/><path d="M6.500 13.500L12 8.500l5.500 5M8.500 13v6h7v-6" fill="none" stroke="#444" stroke-width="1.400"/></symbol>
<symbol id="foldp" viewBox="0 0 24 24"><path d="M2 2.500h9l3 3.500h8v15.500H2z" fill="#a8e82a" stroke="#8d8d88"/><path d="M3 7l17 14M3 15l8-6" stroke="#fff" stroke-width="1.300"/><path d="M13 6h8v7l-5 2-4-4z" fill="#0a9a0a"/></symbol>
<symbol id="pg" viewBox="0 0 24 24"><path d="M1 4q3-4 8-2 6-2 11-.5 4 2 2 8-1 5-3.500 5v2l4 0q-2 2-4.500 1.500L17 23q-3 1.500-4 0l-1-8q-2 1-3-1l-2 3q-5-3-6-13z" fill="#5a93cc" stroke="#2d5c8a"/><path d="M9 3q-3 5 0 11M16 3q3 4 1 11" fill="none" stroke="#2d5c8a" stroke-width="1.300"/></symbol>
<symbol id="ms" viewBox="0 0 24 24"><path d="M1 1q16 1 22 10-10 1-22 10 8-9 0-20z" fill="#5a93cc" stroke="#2d5c8a" stroke-width=".8"/><path d="M8 2q6 7 1 14M13 4q5 5 2 10M17.500 6q3 3 2 7" fill="none" stroke="#1e1e1e" stroke-width="1"/></symbol>
<symbol id="ora" viewBox="0 0 24 24"><rect x="1" y="4" width="22" height="16.500" rx="6" fill="#5a93cc" stroke="#345f8c" stroke-width="2"/></symbol>
<symbol id="glw" viewBox="0 0 24 24"><circle cx="12" cy="12" r="11" fill="#a9cbee" stroke="#4f86bf"/><path d="M4 6q5-3 7 0l-3 6-4-2zM13 7l6-2 2 6-5 3zM8 13l4 0 0 7-3-2z" fill="#28517c"/><path d="M1 9h22M1 15.500h22M12 1q-9 11 0 22M12 1q9 11 0 22" fill="none" stroke="#dbe9f7" stroke-width=".9"/></symbol>
<symbol id="vt" viewBox="0 0 24 24"><path d="M2 1.500h20V23H2z" fill="#27415a"/><path d="M3.500 3h5v5h-5zM9.800 3h5v5h-5zM16 3h5v5h-5z" fill="#eef4fa"/><path d="M3.500 9.500h5v5h-5zM9.800 9.500h5v5h-5zM16 9.500h5v5h-5z" fill="#cfe0f2"/><path d="M3.500 16h5v5h-5zM9.800 16h5v5h-5zM16 16h5v5h-5z" fill="#a9c9e8"/></symbol>
<symbol id="xyz" viewBox="0 0 24 24"><path d="M2 2h5.500v5.500H2zM9.500 2H15v5.500H9.500zM17 2h5.500v5.500H17zM2 9.500h5.500V15H2zM9.500 9.500H15V15H9.500zM17 9.500h5.500V15H17zM2 17h5.500v5.500H2zM9.500 17H15v5.500H9.500zM17 17h5.500v5.500H17z" fill="#5a93cc"/></symbol>
<symbol id="wcs" viewBox="0 0 24 24"><circle cx="12" cy="12" r="10.500" fill="#244b75"/><path d="M2 6h20v3H2zM1.500 13h21v4h-21z" fill="#6ba3dd"/><path d="M1.500 9.500h21M1.500 16h21M12 1.500q-9 10.500 0 21M12 1.500q9 10.500 0 21" fill="none" stroke="#fff" stroke-width="1.200"/></symbol>
<symbol id="wfs" viewBox="0 0 24 24"><circle cx="12" cy="12" r="10.800" fill="#16202b" stroke="#3f78b5" stroke-width="1.300"/><path d="M1.500 8h21M1.500 16h21M12 1.500q-9 10.500 0 21M12 1.500q9 10.500 0 21" fill="none" stroke="#3f78b5" stroke-width="1.100"/></symbol>
<symbol id="arc" viewBox="0 0 24 24"><use href="#wfs"/><circle cx="8" cy="17.500" r="6.200" fill="#4a545c" stroke="#eee" stroke-width="1.200"/><path d="M5 16q3-4 5-1l-2 5z" fill="#fff"/></symbol>
<symbol id="gn" viewBox="0 0 24 24"><path d="M12 12V2M12 12v10M12 12L3 7M12 12l9 5M12 12l9-5M12 12l-9 5" stroke="#5a93cc" stroke-width="3.600" stroke-linecap="round"/><circle cx="12" cy="12" r="2.500" fill="#8fbce6"/></symbol>
<symbol id="bone" viewBox="0 0 24 24"><path d="M2 5q4-2 9 2 6-3 12-1 1 6-.5 11-6 1-10-2-5 5-10 5.500Q-.5 12 2 5z" fill="#dcdcdc" stroke="#9d9d9d" stroke-width=".8"/></symbol>
<symbol id="ras" viewBox="0 0 24 24"><path d="M2 2h20v20H2z" fill="#a6c6ea"/><path d="M2 2h6.600v6.600H2zM15.300 2H22v6.600h-6.700zM8.600 8.600h6.700v6.700H8.600zM2 15.300h6.600V22H2zM15.300 15.300H22V22h-6.700z" fill="#28435f"/></symbol>
<symbol id="tab" viewBox="0 0 24 24"><rect x="2" y="1" width="20" height="22" rx="1" fill="#e6e6e2" stroke="#9a9a96"/><path d="M5 4.500h5M13 4.500h6M2 7.500h20M5 10.500h5M13 10.500h6M5 14.500h5M13 14.500h6M5 18.500h5M13 18.500h6" stroke="#85857f" stroke-width="1.200"/></symbol>
<symbol id="vl" viewBox="0 0 24 24"><path d="M2.500 5.500l6.500 13L16 3h6" fill="none" stroke="#888" stroke-width="1"/><g fill="#eee" stroke="#888" stroke-width=".7"><circle cx="2.500" cy="5.500" r="1.700"/><circle cx="9" cy="19" r="1.700"/><circle cx="16" cy="3" r="1.700"/><circle cx="22" cy="3" r="1.700"/></g></symbol>
<symbol id="dot" viewBox="0 0 24 24"><circle cx="12" cy="12" r="1.700" fill="#f2a0a8"/></symbol>
<symbol id="ring" viewBox="0 0 24 24"><circle cx="12" cy="12" r="3.900" fill="#000" stroke="#a5a5a5" stroke-width="1.200"/></symbol>
<symbol id="xx" viewBox="0 0 24 24"><path d="M8 8l8 8M16 8l-8 8" stroke="#333a40" stroke-width=".8"/></symbol>
<symbol id="float" viewBox="0 0 24 24"><rect x="1.500" y="1.500" width="21" height="21" fill="none" stroke="#9a9994" stroke-width="1.300"/><path d="M9 5.500h9.500V14M9 5.500V9M5.500 9.500h9V18h-9z" fill="none" stroke="#9a9994" stroke-width="1.400"/></symbol>
<symbol id="close" viewBox="0 0 24 24"><rect x="1.500" y="1.500" width="21" height="21" fill="none" stroke="#9a9994" stroke-width="1.300"/><path d="M5.500 5.500l13 13M18.500 5.500l-13 13" stroke="#85847f" stroke-width="2.400"/></symbol>
<symbol id="search" viewBox="0 0 24 24"><circle cx="10" cy="10" r="7.500" fill="none" stroke="#9a9a9a" stroke-width="1.900"/><path d="M15.500 15.500l7 7" stroke="#9a9a9a" stroke-width="2.200"/></symbol>
<symbol id="mouse" viewBox="0 0 24 24"><path d="M2.500 3.500Q6 0 9 3l3 7q-3 4.500-7 2Q1.500 8 2.500 3.500z" fill="#eee" stroke="#000" stroke-width="1.400"/><path d="M5.500 3l3 7" stroke="#000" stroke-width="1.500"/><path d="M12 10q6-2 9 4 1 7-5 8.500-7 .5-7-5 0-3 3-4z" fill="#fff" stroke="#000" stroke-width="1.400"/><circle cx="14" cy="17.500" r="2.400" fill="none" stroke="#000" stroke-width="1.300"/><path d="M17 5h3M19.500 2h3M1 17h2" stroke="#000" stroke-width="1.500"/></symbol>
<symbol id="padl" viewBox="0 0 24 24"><path d="M7 12V7q0-5 5-5t5 5v5" fill="none" stroke="#d0d0d0" stroke-width="2.200"/><rect x="4" y="11.500" width="16" height="12" rx="1.500" fill="#777"/></symbol>
<symbol id="gcrs" viewBox="0 0 24 24"><circle cx="12" cy="11.500" r="10.500" fill="#a5a5a5"/><path d="M1.500 8h21M2 14h20M12 1v21M12 1q-9 10.500 0 21M12 1q9 10.500 0 21M5 19h14" fill="none" stroke="#3a3a3a" stroke-width="1"/></symbol>
<symbol id="msg" viewBox="0 0 24 24"><path d="M12 1.500a10.500 9.500 0 1 0 2 19l6 3-1.500-5A10.500 9.500 0 0 0 12 1.500z" fill="#767676"/><g fill="#fff"><circle cx="7.500" cy="11" r="1.500"/><circle cx="12" cy="11" r="1.500"/><circle cx="16.500" cy="11" r="1.500"/></g></symbol>

<!-- tribal lands: coordinates are page pixels of the main canvas -->
<g id="lands">
<g transform="translate(640 540) scale(.625 .5357)" fill="#ff7800" stroke="#ff7800" stroke-width="1.500">
<path d="M127 80L415 92 412 172 335 170 330 182 310 186 314 195 308 205V220L325 217 335 226 350 223 358 234 385 233 395 237 409 233V262L428 264V276L445 278 451 268 462 260 463 273 475 275 482 287 493 292 498 310 506 328V375L512 372 515 385 480 390 475 402 455 405 452 430 456 440 440 465 438 482 420 485 418 472 400 470V482H397V570H392V690L410 692V680H440L468 690V710L455 712V738L462 755 505 757V795L490 800 512 820V838L495 840V850L480 852 478 893 440 893 430 905V925L400 929 385 918 370 910 354 898 346 885V860L360 850V792L102 787z"/>
<path d="M92 1036L170 1041 180 1060 186 1062V1048L190 1030 210 1010 205 990 230 985 240 972 282 975 281 1050 289 1064 280 1066 278 1140 287 1158 288 1170 270 1184 250 1188 218 1188V1181L200 1184 195 1180 182 1186V1194L155 1193 150 1200H110L88 1202z"/>
<path d="M494 95L578 99V101L494 98zM608 99L658 102V104L608 102zM567 1055L598 1056V1064L567 1063z"/>
<path d="M793 105L881 107 879 112 871 115V123L881 125V130L870 148 881 153 883 163H912L915 173H925L930 180 940 176 948 185 954 205H963V187L985 188 992 197 1015 197 1020 190 1014 180 1018 156H1028L1032 146 1040 153 1052 156V163L1065 165 1090 166 1098 178 1078 182 1074 202 1055 192 1035 204H1024L1016 220 1021 232 1010 250 977 250V262L960 263 961 280 945 292 952 322 960 327 962 343 942 345V360L829 358V404L789 402 786 493 861 495 859 587 739 586 735 592 706 584 711 353 789 355z"/>
<path d="M596 280L599 355 597 390 610 400 608 408 600 410 596 425 580 440V465H572V440L590 410 593 390 594 355 588 345 586 322 577 318 588 315 592 290z"/>
<path d="M1369 377L1376 370 1392 365 1408 361 1420 361 1424 354 1432 358 1445 350 1453 355V366L1464 368 1469 384 1460 395 1459 420 1450 432 1430 426 1407 426 1405 431H1369L1363 414H1369zM1357 363L1362 378 1364 398 1342 371zM1320 384L1357 424 1350 436 1320 461 1324 445 1320 418z"/>
<path d="M1309 513h36v42h-36zM1177 590h36v40h-36z"/>
<path d="M1074 636L1095 635 1112 626 1135 627 1145 633H1205V674L1225 675V678H1250V697H1266V730H1245V762H1210V722H1220V716L1197 713V684L1194 685V715H1165L1152 728 1135 724 1118 712 1145 712V706L1130 700V695L1148 693V682L1165 672 1168 662 1150 658 1130 662V655L1110 652 1105 662H1076z"/>
<path d="M1282 713h3v8h-3zM1279 739h4v4h-4zM1279 752h3v4h-3z"/>
<path d="M862 726L902 726 906 723 909 726V816L973 818V830L1010 837 1028 828 1055 843V824H1074L1076 806H1135V875L1112 876 1134 888V929L1087 917V969L1040 972 1033 982 1015 989 990 970 980 957 952 952 947 945 932 949 911 945V880L920 875 932 877 940 857H905V870L868 869 864 858 869 838V785L853 778z"/>
<path d="M997 791h50l3 5v9H989l3-11zM1012 997L1040 1017 1035 1050 1041 1061 988 1051 999 1036 995 1012z"/>
<path d="M789 923L812 922 835 973 869 974V1076H849V1088L868 1090V1115L860 1124V1137L875 1138 873 1168 870 1178 948 1181 960 1184 1098 1187V1203L1087 1220 1089 1247 1078 1259 967 1257 966 1240 955 1228 948 1244 849 1243 847 1263 790 1262V1200L770 1190 730 1222 653 1220V1265L645 1290 655 1305 645 1330 652 1360 640 1380 650 1400 670 1420 690 1418V1438L683 1445 698 1450V1468L688 1480V1508L676 1517H654L642 1515V1450L610 1430 590 1420H555V1383L578 1377V1355H572V1307L520 1306 516 1290 522 1278 509 1272 525 1240 550 1222 540 1200 535 1182 568 1170V1101L661 1113V1085L672 1070 745 1072 752 1078 765 1066 780 1064 783 1045 793 1027 800 1050 832 1055V1040L820 1038V1030L825 1020V1000L834 995 820 990 816 1008 810 990 790 994z"/>
<path d="M670 1008L692 1008 694 1022 688 1060 680 1072 669 1068 677 1030zM644 1026L661 1036V1055L640 1061zM630 1062L658 1062 655 1075 635 1095zM179 1420l8-3v8l-5 3z"/>
</g>
<g transform="translate(640 540) scale(.625 .5357)" fill="#fff">
<path d="M1014 877l12-5 8 8 3 42h-23zM811 1128l38-1v12l-36-2zM772 1180l14-2 9 18h-8zM467 325l5-8 5 1v14h-8zM466 772l26-1v8l-10 1zM1085 863l25 3 12 10-15-6z"/>
</g>
<path class="specks" fill="#ff7800" transform="translate(640 540) scale(.625 .5357)"/>
<path d="M1411 1614h48v24h97l2 85h-86l-38-1v-61h-23z" fill="#ff7800"/>
<path d="M1053 1929h3v3h-3z" fill="#ffb469"/>
</g>
</defs>
</svg>

<div class="desktop">
<section class="win main">
  <header class="title"><i></i><i></i><i></i><h1>*carto-with-illustrator — QGIS</h1></header>
  <div class="bar">
    <span class="grip"></span>
    <svg class="ic"><use href="#new"/></svg><svg class="ic"><use href="#open"/></svg><svg class="ic"><use href="#save"/></svg><svg class="ic"><use href="#layout"/></svg><svg class="ic"><use href="#wrench"/></svg><svg class="ic"><use href="#style"/></svg>
    <span class="grip"></span>
    <span class="on"><svg class="ic"><use href="#hand"/></svg></span><svg class="ic"><use href="#panto"/></svg><svg class="ic"><use href="#zin"/></svg><svg class="ic"><use href="#zout"/></svg><svg class="ic"><use href="#zfull"/></svg><svg class="ic"><use href="#zsel"/></svg><svg class="ic"><use href="#zlay"/></svg><svg class="ic off"><use href="#z11"/></svg><svg class="ic"><use href="#zlast"/></svg><svg class="ic off"><use href="#znext"/></svg><svg class="ic"><use href="#nmap"/></svg><svg class="ic"><use href="#n3d"/></svg><svg class="ic"><use href="#nbook"/></svg><svg class="ic"><use href="#book"/></svg><svg class="ic"><use href="#clock"/></svg><svg class="ic"><use href="#refresh"/></svg>
    <span class="grip"></span>
    <svg class="ic"><use href="#ident"/></svg><svg class="ic"><use href="#abacus"/></svg><svg class="ic"><use href="#gear"/></svg><svg class="ic"><use href="#sigma"/></svg><svg class="ic"><use href="#table"/></svg><span class="dd"></span><svg class="ic"><use href="#measure"/></svg><span class="dd"></span><svg class="ic"><use href="#tip"/></svg><svg class="ic dim"><use href="#run"/></svg><span class="dd"></span>
  </div>
  <div class="bar">
    <span class="grip"></span>
    <svg class="ic"><use href="#dsm"/></svg><svg class="ic"><use href="#ngpkg"/></svg><svg class="ic"><use href="#nshp"/></svg><svg class="ic"><use href="#nspat"/></svg><svg class="ic"><use href="#nmem"/></svg><svg class="ic"><use href="#nmesh"/></svg><span class="sep"></span><svg class="ic"><use href="#nvirt"/></svg><span class="sep"></span>
    <span class="grip"></span>
    <span class="menu"><svg class="ic off"><use href="#pencils"/></svg></span><svg class="ic"><use href="#pencil"/></svg><svg class="ic off"><use href="#savee"/></svg><svg class="ic off"><use href="#addpt"/></svg><svg class="ic off"><use href="#vtool"/></svg><span class="dd d22"></span><svg class="ic off"><use href="#attr"/></svg><svg class="ic off"><use href="#trash"/></svg><svg class="ic off"><use href="#cut"/></svg><svg class="ic dim"><use href="#copy"/></svg><svg class="ic dim"><use href="#paste"/></svg><svg class="ic off"><use href="#undo"/></svg><svg class="ic off"><use href="#redo"/></svg>
    <span class="grip g30"></span>
    <span class="tag"><svg class="ic"><use href="#labY"/></svg><b>abc</b></span><svg class="ic"><use href="#diag"/></svg><span class="sep"></span><span class="tag ab"><svg class="ic"><use href="#labB"/></svg><b>ab</b></span><span class="tag red"><svg class="ic"><use href="#labR"/></svg><b>abc</b></span><span class="sep"></span><span class="tag ab off"><svg class="ic"><use href="#labG"/></svg><b>ab</b></span>
    <span class="more m1">»</span>
    <span class="grip g20"></span>
    <span class="menu"><svg class="ic"><use href="#wms"/></svg></span><span class="more m2">»</span>
    <span class="grip g26"></span><svg class="ic"><use href="#python"/></svg>
    <span class="grip"></span><svg class="ic"><use href="#help"/></svg>
    <span class="grip"></span>
  </div>
  <div class="bar last">
    <span class="grip"></span>
    <svg class="ic"><use href="#sel"/></svg><span class="dd"></span><svg class="ic"><use href="#selform"/></svg><span class="dd"></span><svg class="ic"><use href="#desel"/></svg><span class="dd"></span><svg class="ic"><use href="#selloc"/></svg>
    <span class="grip"></span>
    <svg class="ic off"><use href="#meshed"/></svg><svg class="ic off"><use href="#meshsel"/></svg><span class="dd"></span><svg class="ic off"><use href="#meshtr"/></svg><svg class="ic off"><use href="#meshpoly"/></svg><span class="dd"></span>
    <span class="grip"></span>
    <svg class="ic"><use href="#annl"/></svg><span class="dd"></span><svg class="ic"><use href="#selitem"/></svg><svg class="ic"><use href="#poly"/></svg><svg class="ic"><use href="#line"/></svg><svg class="ic"><use href="#star"/></svg><svg class="ic"><use href="#text"/></svg><span class="sep"></span><svg class="ic"><use href="#htmla"/></svg><span class="dd"></span>
  </div>
  <div class="body">
    <aside class="side">
      <div class="panel">
        <h2>Browser<svg><use href="#float"/></svg><svg><use href="#close"/></svg></h2>
        <div class="tools"><svg><use href="#plus-l"/></svg><svg><use href="#refresh"/></svg><svg><use href="#filter"/></svg><svg><use href="#coll"/></svg><svg><use href="#info"/></svg></div>
        <ul class="tree browser">
          <li><svg><use href="#fav"/></svg>Favorites</li>
          <li class="a"><svg><use href="#book"/></svg>Spatial Bookmarks</li>
          <li class="a"><svg><use href="#foldp"/></svg>Project Home</li>
          <li class="a"><svg><use href="#foldh"/></svg>Home</li>
          <li class="a"><svg><use href="#fold"/></svg>/ (Macintosh HD)</li>
          <li class="a"><svg><use href="#fold"/></svg>/Volumes</li>
          <li><svg><use href="#gpkg"/></svg>GeoPackage</li>
          <li class="a"><svg><use href="#feather"/></svg>SpatiaLite</li>
          <li><svg><use href="#pg"/></svg>PostGIS</li>
          <li><svg><use href="#ms"/></svg>MSSQL</li>
          <li><svg><use href="#ora"/></svg>Oracle</li>
          <li><svg><use href="#glw"/></svg>WMS/WMTS</li>
          <li><svg><use href="#vt"/></svg>Vector Tiles</li>
          <li class="a"><svg><use href="#xyz"/></svg>XYZ Tiles</li>
          <li><svg><use href="#wcs"/></svg>WCS</li>
          <li><svg><use href="#wfs"/></svg>WFS / OGC API - Features</li>
          <li><svg><use href="#arc"/></svg>ArcGIS REST Servers</li>
          <li><svg><use href="#gn"/></svg>GeoNode</li>
        </ul>
      </div>
      <div class="hsplit"></div>
      <div class="panel">
        <h2 class="lay">Layers<svg><use href="#float"/></svg><svg><use href="#close"/></svg></h2>
        <div class="tools lt"><svg><use href="#brush"/></svg><svg><use href="#addgrp"/></svg><span class="menu"><svg><use href="#eye"/></svg></span><span class="menu"><svg><use href="#filter"/></svg></span><svg><use href="#eps"/></svg><span class="dd"></span><svg><use href="#expd"/></svg><svg><use href="#coll"/></svg><svg><use href="#minus-l"/></svg></div>
        <ul class="tree layers">
          <li class="x"><u></u><svg><use href="#dot"/></svg><em>ose_pods-sample-shp</em></li>
          <li class="x"><u></u><s class="thin"></s><em>nm_boundary</em></li>
          <li class="a"><u></u><svg><use href="#grp"/></svg><span>Interstates &amp; Highways</span></li>
          <li class="x"><u></u><s class="brown"></s><em>nm_NativeAmericanLands_subset</em></li>
          <li class="a"><u></u><svg><use href="#bone"/></svg><em>1999 - Percent 18+ Below Poverty Level</em></li>
          <li class="a"><u></u><svg><use href="#ras"/></svg><em>bmng-nm</em></li>
          <li class="t"><svg><use href="#tab"/></svg><strong>Modified-DECENNIALDPSF32000.DP</strong></li>
          <li class="o"><u class="c"></u><svg><use href="#grp"/></svg><span>Export Layers</span></li>
          <li class="in hot"><u class="c"></u><svg><use href="#xx"/></svg><strong class="ul">Grid</strong></li>
          <li class="in a"><u></u><svg><use href="#vl"/></svg><em>nm_transportation_merged</em></li>
          <li class="in a"><u></u><svg><use href="#bone"/></svg><em>1999 - Percent 18+ Below Poverty Level</em></li>
          <li class="in"><u class="c"></u><s class="orange"></s><strong>nm_NativeAmericanLands_subset</strong></li>
          <li class="in"><u></u><svg><use href="#ring"/></svg><em>ose_pods-sample-shp copy</em></li>
          <li class="in"><u></u><s class="thick"></s><em>nm_boundary copy</em></li>
          <li class="a"><u></u><svg><use href="#ras"/></svg><em>bmng-nm copy</em></li>
        </ul>
        <div class="hscroll"><span class="l"></span><span class="thumb"></span><span class="r"></span></div>
      </div>
    </aside>
    <div class="vsplit"><span></span></div>
    <div class="canvas"><svg viewBox="600 288 1594 2150"><use href="#lands"/><path d="M625 468l25 25m0-25l-25 25M2143 468l25 25m0-25l-25 25M625 2238l25 25m0-25l-25 25M2143 2238l25 25m0-25l-25 25" stroke="#777" stroke-width="1.300"/></svg></div>
  </div>
  <footer class="status">
    <div class="field find"><svg><use href="#search"/></svg>Type to locate (⌘K)</div>
    <span class="clip tog">To</span>
    <span class="clip coo">Coordinate</span>
    <div class="field cval">718627,4059547</div>
    <svg class="mouse"><use href="#mouse"/></svg>
    <span class="clip sca">Scale</span>
    <div class="field sval">1:4481372<span class="drop"></span></div>
    <svg class="padl"><use href="#padl"/></svg>
    <span class="clip magn">Magnifier</span>
    <div class="field mval">100%<span class="spin"></span></div>
    <span class="clip rot">Rotation</span>
    <div class="field rval">0.0 °<span class="spin"></span></div>
    <u class="c"></u><span class="ren">Render</span>
    <svg class="crs"><use href="#gcrs"/></svg><span class="epsg">EPSG:26913</span>
    <svg class="msg"><use href="#msg"/></svg>
  </footer>
</section>

<section class="win layoutw">
  <header class="title"><i></i><i></i><i></i><h1>*New Mexico</h1></header>
  <div class="bar">
    <span class="grip"></span>
    <svg class="ic"><use href="#save"/></svg><span class="sep"></span><svg class="ic"><use href="#layout"/></svg><svg class="ic"><use href="#dupl"/></svg><svg class="ic"><use href="#wrench"/></svg><svg class="ic"><use href="#open"/></svg><svg class="ic"><use href="#savet"/></svg><span class="sep"></span><svg class="ic"><use href="#npage"/></svg><span class="sep s12"></span><svg class="ic"><use href="#print"/></svg><svg class="ic"><use href="#ximg"/></svg><svg class="ic"><use href="#xsvg"/></svg><span class="on"><svg class="ic"><use href="#xpdf"/></svg></span><svg class="ic"><use href="#undo"/></svg><svg class="ic dim"><use href="#redo"/></svg>
    <span class="grip"></span>
    <svg class="ic dim"><use href="#atlas"/></svg><svg class="ic dim"><use href="#first"/></svg><svg class="ic dim"><use href="#prev"/></svg><div class="pagebox">1<span class="drop"></span></div><svg class="ic dim"><use href="#next"/></svg><svg class="ic dim"><use href="#last"/></svg><svg class="ic dim"><use href="#print"/></svg><svg class="ic dim"><use href="#ximg"/></svg><span class="dd"></span><svg class="ic"><use href="#atlset"/></svg>
  </div>
  <div class="bar last">
    <span class="grip"></span>
    <svg class="ic"><use href="#zin"/></svg><svg class="ic"><use href="#zout"/></svg><svg class="ic"><use href="#z11"/></svg><svg class="ic"><use href="#zfull"/></svg><svg class="ic"><use href="#refresh"/></svg>
    <span class="grip"></span>
    <svg class="ic"><use href="#lock"/></svg><svg class="ic"><use href="#unlock"/></svg><svg class="ic"><use href="#group"/></svg><svg class="ic"><use href="#ungroup"/></svg><span class="menu"><svg class="ic"><use href="#raise"/></svg></span><span class="menu"><svg class="ic"><use href="#align"/></svg></span><span class="menu"><svg class="ic"><use href="#distr"/></svg></span><span class="menu"><svg class="ic"><use href="#resize"/></svg></span>
    <div class="tooltip">Export as PDF...</div>
  </div>
  <div class="work">
    <nav class="toolbox">
      <span class="hgrip"></span>
      <svg><use href="#hand"/></svg><svg><use href="#zoomt"/></svg><span class="on"><svg><use href="#selitem"/></svg></span><svg><use href="#movec"/></svg><svg><use href="#nodes"/></svg><svg><use href="#amap"/></svg><svg><use href="#a3d"/></svg><svg><use href="#apic"/></svg><svg><use href="#alab"/></svg><svg><use href="#aleg"/></svg><svg><use href="#ascale"/></svg><svg><use href="#anorth"/></svg><span class="menu"><svg><use href="#ashape"/></svg></span><svg><use href="#star"/></svg><svg><use href="#aarrow"/></svg><span class="menu"><svg><use href="#anode"/></svg></span><svg><use href="#ahtml"/></svg><svg><use href="#atable"/></svg><svg><use href="#amant"/></svg>
    </nav>
    <div class="view">
      <svg class="hruler" viewBox="2277 202 1809 30"></svg>
      <div class="row">
        <svg class="vruler" viewBox="2277 232 31 2208"></svg>
        <div class="paper">
          <div class="shadow"></div>
          <div class="page">
            <svg viewBox="2514 460 1366 1752">
              <g transform="translate(2561 610) scale(.8235) translate(-637 -480)"><use href="#lands"/></g>
              <path d="M2549 598l25 25m0-25l-25 25M3799 598l25 25m0-25l-25 25M2549 2056l25 25m0-25l-25 25M3799 2056l25 25m0-25l-25 25" stroke="#777" stroke-width="1.200"/>
              <g fill="none" stroke="#0090c4" stroke-width="1">
                <path d="M2514 480.500h20.500v-20M3186.500 460v20.500h20v-20M3859.500 460v20.500h21M2514 1325.500h20.500v20h-20.500M3880 1325.500h-20.500v20H3880M2514 2191.500h20.500v20M3186.500 2212v-20.500h20v20M3859.500 2212v-20.500h21"/>
                <path d="M2514.500 460.500h1365v1751h-1365z"/>
                <path d="M2514.500 460.500h1365v1751h-1365z" stroke="#6b0032" stroke-dasharray="4 2"/>
              </g>
            </svg>
          </div>
        </div>
      </div>
    </div>
  </div>
  <footer class="status">
    <span class="sx">x: 100 mm</span><span class="sy">y: 0 mm</span><span class="sp">page: 1</span>
    <div class="field zval">52.7%<span class="drop"></span></div>
    <div class="slider"><span></span></div>
  </footer>
</section>
</div>
<script src="script.js"></script>
</body>
</html>
```

FILE: styles.css
```css
* { box-sizing: border-box; }
body {
  margin: 0;
  width: 4086px;
  height: 2500px;
  overflow: hidden;
  background: #000;
  font-family: Inter, "Liberation Sans", sans-serif;
  font-size: 24px;
  color: #e2e2e2;
}
h1, h2, ul { margin: 0; padding: 0; }
.defs { position: absolute; width: 0; height: 0; }
.desktop { display: flex; height: 2500px; gap: 2px; background: linear-gradient(#0a0a0a 98%, #3d4a24 99%); }

.win { display: flex; flex-direction: column; height: 2500px; background: #323232; overflow: hidden; position: relative; }
.main { width: 2196px; border-right: 2px solid #3c3c3c; border-bottom: 3px solid #5c5c5c; border-radius: 18px; }
.layoutw { width: 1888px; border-left: 2px solid #5a5a5a; border-bottom: 2px solid #5c5c5c; border-radius: 18px; }

/* title bars */
.title { display: flex; align-items: center; flex: none; position: relative; background: #141414; height: 53px; border-bottom: 1px solid #000; padding: 0 0 4px 14px; gap: 16px; }
.title i { width: 24px; height: 24px; border-radius: 50%; background: #3d3d3d; }
.title h1 { flex: 1; text-align: center; font-size: 26px; font-weight: 600; color: #5a5a5a; margin-left: -136px; letter-spacing: .3px; }
.layoutw .title { height: 47px; background: #262626; padding: 0 0 10px 14px; }
.layoutw .title i:nth-child(1) { background: #ff5f57; }
.layoutw .title i:nth-child(2) { background: #febc2e; }
.layoutw .title i:nth-child(3) { background: #28c840; }
.layoutw .title h1 { color: #a8a8a8; letter-spacing: -.1px; line-height: 30px; margin-top: -2px; }

/* toolbars */
.bar { display: flex; align-items: center; flex: none; height: 78px; padding-bottom: 3px; background: linear-gradient(#343434, #303030); border-bottom: 1px solid #7d7d7d; position: relative; box-shadow: inset 0 -3px 0 #272727; }
.bar.last { height: 76px; padding-bottom: 0; border-bottom: 2px solid #858585; }
.ic { width: 48px; height: 48px; margin: 0 9px; flex: none; display: block; }
.off { opacity: .28; filter: grayscale(.55); }
.dim { opacity: .4; filter: grayscale(.6); }
.grip { flex: none; width: 31px; display: flex; justify-content: flex-end; padding-right: 5px; }
.main .last .grip { width: 33px; }
.bar .grip:first-child { width: 23px; }
.grip.g30 { width: 30px; } .grip.g20 { width: 20px; } .grip.g26 { width: 26px; }
.grip::before { content: ""; width: 11px; height: 35px; background: conic-gradient(at 4px 4px, transparent 75%, #868686 0) 0 0 / 6.500px 6.200px; }
.sep { flex: none; width: 15px; height: 40px; background: linear-gradient(#262626, #262626) 7px 0 / 2px 100% no-repeat; }
.sep.s12 { width: 12px; }
.dd { flex: none; width: 24px; display: flex; justify-content: center; }
.dd.d22 { width: 22px; }
.dd::before, .menu::after { content: ""; border: 8px solid transparent; border-top: 9px solid #b9b9b9; border-bottom: 0; }
.on { flex: none; width: 66px; height: 60px; display: flex; align-items: center; position: relative; z-index: 0; }
.on::before { content: ""; position: absolute; z-index: -1; inset: 0 2px; border: 2px solid #555; border-radius: 6px; background: #2b2b2b; outline: 2px solid #232323; }
.layoutw .bar .on::before { background: #454545; border-color: #5c5c5c; }
.menu { position: relative; display: flex; }
.menu::after { position: absolute; right: 5px; bottom: 0; border-width: 7px 6px 0; }
.tag { position: relative; display: flex; }
.tag b { position: absolute; left: 18px; top: 14px; width: 34px; text-align: center; font-size: 15px; line-height: 18px; font-weight: 700; color: #333; }
.tag.ab b { left: 12px; }
.tag.red b { color: #d00; left: 16px; }
.more { color: #444; font-size: 22px; text-align: center; flex: none; }
.m1 { width: 97px; padding-left: 54px; } .m2 { width: 33px; }
.pagebox { width: 165px; height: 60px; margin: 0 3px 0 2px; background: #1c1c1c; border: 2px solid #262626; border-radius: 6px; display: flex; align-items: center; padding-left: 7px; color: #777; font-size: 26px; flex: none; }
.drop { margin-left: auto; align-self: stretch; width: 40px; background: linear-gradient(#484848, #3a3a3a); border: 1px solid #5a5a5a; border-radius: 0 5px 5px 0; display: flex; align-items: center; justify-content: center; }
.drop::before { content: ""; border: 7px solid transparent; border-top: 9px solid #1c1c1c; border-bottom: 0; }
.tooltip { position: absolute; left: 760px; top: 27px; width: 176px; height: 40px; background: rgba(72, 72, 72, .6); border: 2px solid #777; color: #8c8c8c; font-size: 21px; line-height: 36px; text-align: center; white-space: nowrap; }

/* side panels */
.body { display: flex; flex: none; height: 2153px; background: #2e2e2e; }
.side { width: 584px; flex: none; display: flex; flex-direction: column; background: #323232; }
.panel { display: flex; flex-direction: column; }
.panel h2 { height: 41px; display: flex; align-items: center; padding: 0 2px 0 6px; font-size: 21.500px; font-weight: 500; color: #d8d8d8; }
.panel h2 svg { width: 23px; height: 23px; margin-left: 5px; }
.panel h2 svg:first-of-type { margin-left: auto; }
.tools { height: 61px; padding: 0 0 3px 14px; display: flex; align-items: center; gap: 18px; border-bottom: 2px solid #2a2a2a; }
.tools svg { width: 32px; height: 32px; display: block; }
.tree { list-style: none; background: #1e1e1e; overflow: hidden; }
.tree li { height: 36.030px; display: flex; align-items: center; white-space: nowrap; font-weight: 500; color: #f6f6f6; position: relative; letter-spacing: .64px; }
.tree li > svg { width: 32px; height: 32px; flex: none; }
.browser { height: 1120px; }
.browser li { padding-left: 38px; }
.browser li svg { margin-right: 12px; padding: 1px 0; }
.tree .a::before, .tree .o::before { content: ""; position: absolute; left: 11px; top: 10px; border: 8px solid transparent; border-left: 9px solid #b3b3b3; border-right: 0; }
.tree .o::before { left: 12px; top: 15px; border: 8px solid transparent; border-top: 8px solid #b3b3b3; border-bottom: 0; }
.layers .a::before { left: 15px; }
.layers .in.a::before { left: 55px; }
.hsplit { height: 14px; display: flex; align-items: center; padding-left: 278px; }
.hsplit::before { content: ""; width: 34px; height: 4px; background: repeating-linear-gradient(90deg, #868686 0 4px, transparent 4px 6px); }
.panel .lay { height: 37px; }
.lt { height: 63px; gap: 19px; padding-left: 14px; }
.lt .menu::after { right: -5px; bottom: -1px; }
.lt .dd { width: 24px; margin: 0 -12px 0 -15px; }
.layers { height: 790px; }
.layers li { padding-left: 46px; color: #dcdcdc; font-weight: 400; letter-spacing: .8px; }
.layers li > svg, .layers s { margin: 0 13px 0 13px; }
.layers .t { padding-left: 33px; }
.layers .in { padding-left: 86px; }
.layers .hot { background: #454545; }
.layers em { font-weight: 700; color: #8b8b8b; letter-spacing: 1.430px; }
.layers strong { font-weight: 700; letter-spacing: 1.450px; }
.layers .ul { color: #fff; letter-spacing: .8px; text-decoration: underline; text-decoration-thickness: 2.500px; text-underline-offset: 3px; }
u { text-decoration: none; flex: none; width: 27px; height: 27px; border: 2px solid #2a2a2a; border-radius: 2px; background: #1d1d1d; display: block; }
u.c { display: flex; align-items: center; justify-content: center; border-color: #2e2e2e; }
u.c::before { content: ""; width: 8px; height: 16px; border: solid #cfcfcf; border-width: 0 3px 3px 0; transform: rotate(38deg) translate(-1px, -2px); }
s { flex: none; width: 32px; height: 32px; }
.thin { border: 1.500px solid #0878b8; }
.thick { border: 3px solid #0878b8; }
.brown { background: #994a00; border: 1px solid #c05f00; }
.orange { background: #ff7800; }
.hscroll { display: flex; height: 27px; background: #383838; }
.hscroll span { border: 2px solid #565656; background: linear-gradient(#454545, #3c3c3c); display: flex; align-items: center; justify-content: center; }
.hscroll .l, .hscroll .r { width: 26px; }
.hscroll .l::before { content: ""; border: 8px solid transparent; border-right: 9px solid #c0c0c0; border-left: 0; }
.hscroll .r::before { content: ""; border: 8px solid transparent; border-left: 9px solid #c0c0c0; border-right: 0; }
.hscroll .thumb { width: 402px; margin: 0 auto 0 1px; }
.vsplit { width: 16px; flex: none; background: #323232; display: flex; align-items: center; justify-content: center; padding-top: 9px; }
.vsplit span { width: 4px; height: 34px; background: repeating-linear-gradient(#868686 0 4px, transparent 4px 6px); }
.canvas { flex: none; width: 1594px; margin-top: 3px; background: linear-gradient(90deg, #fff 1560px, #e8e8e8 1578px, #b5b5b8); }
.canvas svg { display: block; width: 1594px; height: 2150px; }

/* status bars */
.status { flex: 1; display: flex; align-items: center; position: relative; padding-top: 5px; border-top: 1px solid #272727; white-space: nowrap; }
.field { display: flex; align-items: center; height: 45px; background: #1d1d1d; border: 2px solid #282828; border-radius: 6px; flex: none; }
.find { width: 427px; margin-left: 7px; height: 48px; color: #9a9a9a; padding-left: 14px; letter-spacing: .75px; }
.find svg { width: 26px; height: 26px; margin-right: 15px; }
.clip { display: flex; justify-content: center; overflow: hidden; flex: none; }
.tog { width: 17px; margin-left: 17px; color: #060606; justify-content: flex-start; }
.coo { width: 97px; margin-left: 18px; font-size: 22px; }
.cval { width: 223px; margin-left: 6px; justify-content: center; font-size: 22.500px; padding-right: 5px; }
.mouse { width: 34px; height: 34px; margin-left: 8px; }
.sca { width: 39px; margin-left: 25px; font-size: 22px; }
.sval { width: 184px; margin-left: 5px; padding-left: 5px; font-size: 23px; letter-spacing: -.3px; }
.sval .drop { width: 39px; }
.padl { width: 31px; height: 31px; margin-left: 22px; }
.magn { width: 82px; margin-left: 15px; font-size: 22px; }
.mval { width: 180px; margin-left: 7px; padding-left: 7px; font-size: 22.500px; }
.rot { width: 69px; margin-left: 19px; font-size: 22px; }
.rval { width: 184px; margin-left: 18px; padding-left: 6px; font-size: 23px; }
.spin { margin-left: auto; align-self: stretch; width: 28px; background: linear-gradient(#484848, #3a3a3a); border: 1px solid #5a5a5a; border-radius: 0 5px 5px 0; display: flex; flex-direction: column; align-items: center; justify-content: space-evenly; }
.spin::before, .spin::after { content: ""; border: 8px solid transparent; border-bottom: 9px solid #b9b9b9; border-top: 0; }
.spin::after { border-top: 9px solid #b9b9b9; border-bottom: 0; }
.status u { margin-left: 13px; }
.ren { margin-left: 10px; width: 76px; font-size: 22px; }
.crs { width: 30px; height: 30px; margin-left: 31px; }
.epsg { margin-left: 5px; width: 134px; font-size: 22.500px; color: #060606; }
.msg { width: 34px; height: 34px; margin-left: 42px; }
.status::after { content: ""; position: absolute; right: 0; bottom: 0; width: 24px; height: 24px; background: conic-gradient(at 4px 4px, transparent 75%, #8a8a8a 0) 0 0 / 6px 6px; clip-path: polygon(100% 0, 100% 100%, 0 100%); }

/* layout window */
.work { display: flex; flex: none; height: 2239px; }
.toolbox { width: 77px; flex: none; border-right: 2px solid #272727; display: flex; flex-direction: column; align-items: center; padding-top: 10px; }
.hgrip { width: 36px; height: 10px; margin-bottom: 5px; background: conic-gradient(at 4px 4px, transparent 75%, #868686 0) 0 0 / 6.200px 6.200px; flex: none; }
.toolbox svg { width: 48px; height: 48px; margin: 8px 0; flex: none; display: block; }
.toolbox .on { height: 64px; justify-content: center; }
.toolbox .on::before { inset: 4px 3px; }
.toolbox .menu::after { right: -6px; bottom: 6px; }
.view { flex: 1; padding-top: 1px; }
.hruler { display: block; width: 1809px; height: 30px; }
.row { display: flex; }
.vruler { display: block; width: 31px; height: 2208px; flex: none; }
.hruler text, .vruler text { font-size: 17px; fill: #c6c6c6; }
.paper { position: relative; flex: 1; height: 2208px; background: #d7d7d7; overflow: hidden; }
.shadow { position: absolute; left: 234px; top: 243px; width: 1353px; height: 1752px; background: #969696; }
.page { position: absolute; left: 206px; top: 228px; width: 1366px; height: 1752px; background: #fff; }
.page svg { display: block; width: 1366px; height: 1752px; }
.layoutw .status { font-size: 25px; padding-top: 4px; }
.sx { margin-left: 736px; width: 212px; letter-spacing: .3px; } .sy { width: 212px; letter-spacing: .3px; } .sp { width: 212px; letter-spacing: .3px; }
.zval { width: 256px; height: 48px; padding-left: 7px; }
.slider { width: 196px; height: 10px; margin-left: 14px; background: #3a3a3a; border: 2px solid #272727; border-left: 6px solid #4a9df5; border-radius: 3px; display: flex; align-items: center; }
.slider span { width: 24px; height: 25px; flex: none; border: 2px solid #606060; border-radius: 5px; background: #484848; outline: 1px solid #222; }
```

FILE: script.js
```javascript
// Small checkerboard allotments scattered round the large reservations.
let seed = 20240;
const rnd = () => (seed = (seed * 16807) % 2147483647) / 2147483647;

// [polygon, cell size, density, checker]
const regions = [
  [[395, 480, 470, 480, 490, 560, 470, 640, 470, 790, 390, 800], 7, .7],
  [[430, 385, 520, 385, 575, 395, 560, 430, 500, 440, 450, 440], 8, .55],
  [[455, 430, 575, 400, 600, 450, 645, 490, 690, 535, 690, 560, 600, 560, 555, 590, 470, 560], 8, .34],
  [[530, 520, 600, 470, 640, 500, 690, 540, 715, 590, 640, 580, 590, 560, 545, 580], 8, .42],
  [[600, 590, 720, 570, 740, 620, 775, 650, 790, 690, 798, 735, 760, 780, 740, 805, 700, 770, 715, 690, 650, 670, 605, 690], 8, .36],
  [[565, 675, 625, 675, 632, 735, 590, 735, 580, 752, 565, 745], 7, .8],
  [[600, 625, 645, 625, 655, 695, 615, 690], 7, .75],
  [[728, 628, 770, 645, 765, 670, 728, 670], 6, .88],
  [[710, 690, 790, 685, 798, 735, 765, 765, 720, 720], 8, .65],
  [[706, 585, 740, 587, 715, 620, 700, 610], 7, .8],
  [[662, 770, 693, 770, 693, 806, 662, 803], 7, .85],
  [[583, 768, 620, 768, 615, 790, 590, 808], 8, .55],
  [[726, 765, 752, 765, 752, 806, 726, 800], 7, .65],
  [[640, 725, 700, 740, 695, 757, 643, 742], 8, .4],
  [[103, 788, 240, 790, 230, 825, 180, 835, 160, 830, 160, 870, 105, 870], 7, .56, 1],
  [[230, 790, 362, 792, 350, 872, 315, 878, 255, 858, 230, 850], 7, .72, 1],
  [[100, 870, 165, 872, 190, 878, 250, 862, 253, 940, 268, 968, 240, 985, 190, 1030, 185, 1040, 95, 1034], 7, .62],
  [[200, 930, 250, 930, 268, 970, 210, 1010], 8, .8],
  [[460, 790, 515, 800, 520, 835, 535, 870, 530, 905, 510, 910, 500, 875, 470, 860], 8, .62],
  [[483, 925, 520, 915, 546, 940, 530, 978, 500, 965, 483, 950], 8, .55],
  [[425, 930, 462, 945, 463, 1005, 445, 1000, 438, 960], 7, .6],
  [[405, 245, 430, 250, 440, 270, 412, 262], 7, .45],
  [[283, 1075, 310, 1070, 350, 1095, 345, 1118, 285, 1110], 8, .6],
  [[280, 1125, 355, 1135, 358, 1155, 300, 1160, 283, 1175], 8, .5],
  [[302, 1160, 382, 1162, 382, 1250, 378, 1300, 340, 1300, 335, 1270, 302, 1262], 8, .9],
  [[262, 1203, 302, 1210, 302, 1250, 262, 1248], 8, .95],
  [[105, 1200, 146, 1200, 146, 1290, 157, 1292, 157, 1317, 103, 1298], 8, .9],
  [[655, 1270, 718, 1228, 725, 1240, 690, 1275, 665, 1300], 8, .4],
  [[645, 1308, 690, 1310, 688, 1328, 648, 1338], 8, .85],
  [[732, 1222, 795, 1195, 795, 1267, 730, 1265], 6, .85, 1],
  [[528, 1155, 568, 1160, 560, 1200, 545, 1228, 525, 1215], 8, .55],
  [[770, 905, 816, 907, 816, 926, 775, 930], 8, .75],
  [[895, 905, 915, 880, 912, 925, 895, 925], 8, .4],
  [[612, 1425, 645, 1445, 640, 1480, 625, 1460], 8, .5],
  [[685, 1445, 700, 1455, 692, 1480, 645, 1505], 8, .6],
  [[500, 725, 520, 725, 520, 745, 505, 745], 8, .5],
  [[548, 620, 570, 622, 560, 642], 8, .7]
];

const inside = (x, y, p) => {
  let hit = false;
  for (let i = 0, j = p.length - 2; i < p.length; j = i, i += 2) {
    if ((p[i + 1] > y) !== (p[j + 1] > y) &&
        x < (p[j] - p[i]) * (y - p[i + 1]) / (p[j + 1] - p[i + 1]) + p[i]) hit = !hit;
  }
  return hit;
};

let d = "";
for (const [poly, size, density, checker] of regions) {
  const xs = poly.filter((_, i) => i % 2 === 0), ys = poly.filter((_, i) => i % 2);
  const x0 = Math.min(...xs), x1 = Math.max(...xs), y0 = Math.min(...ys), y1 = Math.max(...ys);
  for (let r = 0, y = y0; y < y1; y += size, r++) {
    for (let c = 0, x = x0; x < x1; x += size, c++) {
      const keep = checker ? ((r + c) % 2 ? .3 : .6) + density * .5 : density;
      if (rnd() > keep || !inside(x + size / 2, y + size / 2, poly)) continue;
      const w = size * (rnd() < .3 ? 1.5 : 1.02), h = size * (rnd() < .35 ? 1.6 : 1.1);
      d += `M${x.toFixed(1)} ${y.toFixed(1)}h${w.toFixed(1)}v${h.toFixed(1)}h-${w.toFixed(1)}z`;
    }
  }
}
document.querySelector(".specks").setAttribute("d", d);

// Rulers: a tick each 2 mm, a longer one each 10 mm, a labelled one each 20 mm.
const MM = 6.268;
let h = "", v = "";
for (let m = -34; m <= 248; m += 2) {
  const x = Math.round(2525 + m * MM), len = m % 20 === 0 ? 30 : m % 10 === 0 ? 11 : 7;
  if (x > 2308) h += `<path d="M${x} ${232 - len}h2V232h-2z" fill="#c8c8c8"/>`;
  if (m % 20 === 0 && x > 2308) h += `<text x="${x + 4}" y="218">${m}</text>`;
}
h += '<path d="M3155 202h1.500v30h-1.500z" fill="#f00"/>';
for (let m = -34; m <= 316; m += 2) {
  const y = Math.round(459 + m * MM), len = m % 20 === 0 ? 30 : m % 10 === 0 ? 11 : 7;
  v += `<path d="M${2308 - len} ${y}H2308v2h-${len}z" fill="#c8c8c8"/>`;
  if (m % 20 === 0) v += `<text transform="translate(2295 ${y + 6}) rotate(-90)" text-anchor="end">${m}</text>`;
}
v += '<path d="M2277 233h31v2h-31z" fill="#f00"/>';
document.querySelector(".hruler").innerHTML = h;
document.querySelector(".vruler").innerHTML = v;
```
